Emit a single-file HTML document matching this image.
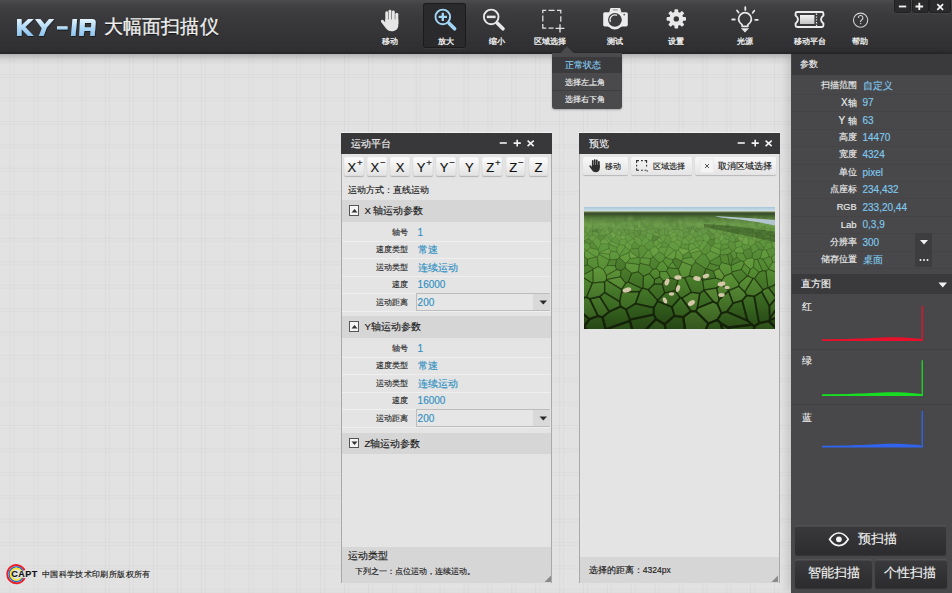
<!DOCTYPE html>
<html><head><meta charset="utf-8">
<style>
*{box-sizing:border-box;margin:0;padding:0}
html,body{width:952px;height:593px;overflow:hidden}
body{-webkit-text-stroke-width:0.15px}
body{position:relative;font-family:"Liberation Sans",sans-serif;background-color:#e2e2e2;
background-image:linear-gradient(90deg,rgba(0,0,0,0.03) 1px,transparent 1px,transparent 3.6px,rgba(0,0,0,0.022) 3.6px,rgba(0,0,0,0.022) 4.6px,transparent 4.6px),linear-gradient(180deg,rgba(0,0,0,0.028) 1px,transparent 1px,transparent 3.2px,rgba(0,0,0,0.022) 3.2px,rgba(0,0,0,0.022) 4.2px,transparent 4.2px);
background-size:23.9px 23.4px,23.9px 23.4px;background-position:9.6px 0,0 4px}
.a{position:absolute}
#hdr{left:0;top:0;width:952px;height:54px;background:linear-gradient(#4c4c4e 0,#424244 8%,#3a3a3c 30%,#343436 65%,#2f2f31 94%,#242426 100%);}
#hshadow{left:0;top:54px;width:791px;height:11px;background:linear-gradient(rgba(0,0,0,0.2),rgba(0,0,0,0.06) 50%,rgba(0,0,0,0))}
.tl{color:#f2f2f2;-webkit-text-stroke-width:0.3px;font-size:8.25px;white-space:nowrap;text-align:center;width:60px;top:35.6px;line-height:12px}
.wb{top:-1px;height:13.5px;background:#2b2b2d;border-radius:0 0 3px 3px;box-shadow:0 0.5px 0 rgba(255,255,255,0.07),inset 0 0 0 1px rgba(0,0,0,0.25)}
#rp{left:791px;top:54px;width:161px;height:539px;background:#48484a;border-left:1px solid #474749;box-shadow:-6px 0 8px -2px rgba(0,0,0,0.13)}
.rh{left:0;width:161px;height:21px;background:#3a3a3c;color:#f2f2f2;font-size:9.4px;line-height:21px;padding-left:9px}
.rl{width:64.6px;left:0;text-align:right;color:#ececec;font-size:8.8px;line-height:17.45px;height:17.45px}
.rv{left:70.5px;color:#80c8ee;font-size:10px;line-height:17.45px;height:17.45px;white-space:nowrap}
.rsep{left:0;width:161px;height:1px;background:#444446}
.pn{background:#e4e4e4;border:1px solid #a9a9a9;border-top:none}
.pt{left:-1px;top:0;height:21.4px;background:#38383a;color:#f0f0f0;font-size:9.6px;line-height:21px;padding-left:10px;box-shadow:0 -1px 0 rgba(255,255,255,0.5)}
.ab{top:24.5px;width:19.8px;height:18.7px;background:linear-gradient(#fdfdfd,#e2e2e2);border-radius:2px;box-shadow:0 1px 1px rgba(0,0,0,0.22),inset 0 0 0 0.5px rgba(0,0,0,0.06);font-size:13px;line-height:22.5px;text-align:center;color:#111}
.ab sup{font-size:9.5px;vertical-align:top;line-height:9px;position:relative;top:1.2px;margin-left:0.8px}
.sh{left:0;width:209.4px;height:21.7px;background:#d6d6d6;color:#1a1a1a;font-size:9.6px;line-height:21.5px;padding-left:23px}
.sb{left:7px;top:5px;width:10.5px;height:10.5px;border:1px solid #555;background:#f4f4f4}
.ml{left:0;width:66px;text-align:right;color:#2a2a2a;font-size:8.2px;height:17.5px;line-height:17.5px}
.mv{left:76px;color:#2f8fc2;font-size:10px;height:17.5px;line-height:17.5px;white-space:nowrap}
.msep{left:0;width:209.4px;height:1px;background:#efefef}
.btn{background:linear-gradient(#f8f8f8,#e4e4e4);border-radius:2px;box-shadow:0 1px 1px rgba(0,0,0,0.2);font-size:10px;color:#222;line-height:18.5px;height:18.5px;top:24px}
.dk{background:linear-gradient(#3a3a3c,#2c2c2e);border-radius:2px;box-shadow:inset 0 1.5px 0 rgba(255,255,255,0.13),0 1px 1px rgba(0,0,0,0.3);color:#f2f2f2;text-align:center}
</style></head><body>

<!-- header -->
<div id="hdr" class="a"></div>
<div id="hshadow" class="a"></div>


<!-- logo -->
<svg class="a" style="left:0;top:0" width="240" height="53" viewBox="0 0 240 53">
<defs><linearGradient id="lg" x1="0" y1="0" x2="0" y2="1"><stop offset="0" stop-color="#e4f4ff"/><stop offset="0.45" stop-color="#b4dcf8"/><stop offset="1" stop-color="#8cc4ee"/></linearGradient><filter id="ds" x="-10%" y="-10%" width="120%" height="130%"><feDropShadow dx="0.4" dy="0.9" stdDeviation="0.5" flood-color="#0c0c0c" flood-opacity="0.8"/></filter></defs>
<g fill="url(#lg)" filter="url(#ds)">
<path d="M17 19h4.6v6.3l6.5-6.3h5.6l-8.4 8.1 8.6 8.9h-5.8l-6.5-6.8v6.8H17z"/>
<path d="M35 19h5.4l4.2 5.2 4.4-5.2h5.2l-7.4 8.6-3.2 8.4h-4.8l3-7.7z"/>
<path d="M57 26.3h10.6v3.2H57z"/>
<path d="M72.5 19h4.6l-1.6 17h-4.6z"/>
<path d="M80 19h12.5q3 0 3.2 3l-1 14h-4.6l0.5-5h-6.4l-0.5 5h-4.6zM85 23l-0.4 4.2h6.4l0.3-4.2z"/>
</g>
</svg>
<div class="a" style="left:103.6px;top:15.4px;font-size:19px;line-height:24px;color:#f0f0f0;letter-spacing:0.2px;-webkit-text-stroke-width:0.3px;text-shadow:0 1px 1px rgba(0,0,0,0.6)">大幅面扫描仪</div>

<!-- active toolbar button -->
<div class="a" style="left:423px;top:3px;width:43px;height:45px;background:#2a2a2c;border-radius:3px;box-shadow:inset 0 0 0 1px rgba(0,0,0,0.35),0 1px 0 rgba(255,255,255,0.05)"></div>

<!-- hand -->
<svg class="a" style="left:375px;top:4px" width="30" height="30" viewBox="375 4 30 30">
<g fill="#e6e6e6">
<rect x="385.3" y="11.3" width="2.7" height="12" rx="1.35"/>
<rect x="388.5" y="9.7" width="2.9" height="12" rx="1.45"/>
<rect x="391.9" y="10.5" width="2.9" height="12" rx="1.45"/>
<rect x="395.3" y="12.8" width="3" height="12" rx="1.5"/>
<path d="M385.3 19.5H398.3V25.3C398.3 29 395.6 31.3 391.8 31.3C388.6 31.3 386.9 29.9 385.3 27.6L381.1 21.9A1.45 1.45 0 0 1 383.4 20.2L385.3 22.6Z"/>
</g>
</svg>
<div class="a tl" style="left:359.5px">移动</div>

<!-- zoom in -->
<svg class="a" style="left:433px;top:7px" width="26" height="26" viewBox="0 0 26 26">
<circle cx="9.8" cy="9.9" r="7.3" fill="none" stroke="#a2d6f7" stroke-width="1.9"/>
<path d="M9.8 5.7v8.4M5.6 9.9h8.4" stroke="#a2d6f7" stroke-width="2.3"/>
<path d="M16 16.2l5.6 5.6" stroke="#a2d6f7" stroke-width="3.6" stroke-linecap="round"/>
</svg>
<div class="a tl" style="left:415.8px">放大</div>

<!-- zoom out -->
<svg class="a" style="left:481px;top:7px" width="26" height="26" viewBox="0 0 26 26">
<circle cx="10.2" cy="9.9" r="7.3" fill="none" stroke="#e8e8e8" stroke-width="1.9"/>
<path d="M5.8 9.9h8.8" stroke="#e8e8e8" stroke-width="2.5"/>
<path d="M16.4 16.2l5.6 5.6" stroke="#e8e8e8" stroke-width="3.6" stroke-linecap="round"/>
</svg>
<div class="a tl" style="left:466.5px">缩小</div>

<!-- region select -->
<svg class="a" style="left:538px;top:6px" width="30" height="30" viewBox="538 6 30 30">
<g stroke="#e2e2e2" stroke-width="1.25" fill="none">
<path d="M542.8 13.2V10.4H546.2M548.6 10.4H554.6M557 10.4H560.8V13.6M560.8 16.2V21.8M542.8 15.6V21.6M542.8 24V28H546.2M548.6 28H553.6"/>
<path d="M560 24.3V32.4M555.6 28.3H564.4" stroke-width="1.35"/>
</g>
</svg>
<div class="a tl" style="left:520px">区域选择</div>

<!-- camera -->
<svg class="a" style="left:600px;top:6px" width="30" height="26" viewBox="600 6 30 26">
<g fill="#ececec">
<rect x="603.2" y="12.2" width="24.6" height="14.2" rx="1.6"/>
<path d="M611 8.1h8.6a0.8 0.8 0 0 1 0.8 0.6l1 3.6H609.2l1-3.6a0.8 0.8 0 0 1 0.8-0.6z"/>
<circle cx="614.9" cy="19.9" r="9.5"/>
</g>
<rect x="612.8" y="9.4" width="5" height="1" fill="#8a8a8a"/>
<circle cx="614.9" cy="19.8" r="6.9" fill="#3c3c3e"/>
<path d="M610.3 21.5a4.9 4.9 0 0 1 6.2-6.3" stroke="#ececec" stroke-width="1.3" fill="none" stroke-linecap="round"/>
<circle cx="624.2" cy="14.6" r="0.9" fill="#555"/>
</svg>
<div class="a tl" style="left:584.5px">测试</div>

<!-- gear -->
<svg class="a" style="left:664px;top:6px" width="25" height="26" viewBox="0 0 25 26">
<g fill="#e8e8e8" transform="translate(12.3 12.9)">
<circle r="7.1"/>
<g id="tooth"><rect x="-1.85" y="-9.7" width="3.7" height="4.5" rx="1"/></g>
<use href="#tooth" transform="rotate(45)"/><use href="#tooth" transform="rotate(90)"/><use href="#tooth" transform="rotate(135)"/>
<use href="#tooth" transform="rotate(180)"/><use href="#tooth" transform="rotate(225)"/><use href="#tooth" transform="rotate(270)"/><use href="#tooth" transform="rotate(315)"/>
<circle r="2.7" fill="#38383a"/>
</g>
</svg>
<div class="a tl" style="left:646px">设置</div>

<!-- bulb -->
<svg class="a" style="left:728px;top:4px" width="33" height="31" viewBox="728 4 33 31">
<g stroke="#e8e8e8" fill="none" stroke-linecap="round">
<path d="M745.3 7.2V9.9M737 10.5L738.6 12.5M754.3 10.7L752.7 12.7M732.2 19.5H734.8M755.2 19.8H757.8" stroke-width="1.8"/>
<path d="M742.1 26.3V24.6C740 23.2 738.6 21.3 738.6 19.1A6.4 6.4 0 0 1 751.4 19.1C751.4 21.3 750 23.2 747.9 24.6V26.3Z" stroke-width="1.7" stroke-linejoin="round"/>
</g>
<path d="M740.9 28.3H749.1L745 32.4Z" fill="#e8e8e8"/>
</svg>
<div class="a tl" style="left:715px">光源</div>

<!-- ticket -->
<svg class="a" style="left:792px;top:9px" width="34" height="21" viewBox="792 9 34 21">
<defs><linearGradient id="tg" x1="0" y1="0" x2="0" y2="1"><stop offset="0" stop-color="#f2f2f2"/><stop offset="1" stop-color="#c4c4c4"/></linearGradient></defs>
<path d="M797.1 12H821.9A1.5 1.5 0 0 1 823.4 13.5V15.6Q818.6 19.5 823.4 23.4V25.5A1.5 1.5 0 0 1 821.9 27H797.1A1.5 1.5 0 0 1 795.6 25.5V23.4Q800.4 19.5 795.6 15.6V13.5A1.5 1.5 0 0 1 797.1 12Z" fill="none" stroke="#ececec" stroke-width="1.9"/>
<rect x="800" y="15" width="14.4" height="9" fill="url(#tg)"/>
<path d="M816.5 13.6V26" stroke="#e0e0e0" stroke-width="1.3" stroke-dasharray="1.4 1.4"/>
</svg>
<div class="a tl" style="left:779.5px">移动平台</div>

<!-- help -->
<svg class="a" style="left:851px;top:10px" width="20" height="20" viewBox="851 10 20 20">
<circle cx="860.6" cy="20.2" r="7.1" fill="none" stroke="#d4d4d4" stroke-width="1.1"/>
<path d="M858.3 17.9A2.3 2.3 0 1 1 861.6 19.9C860.9 20.3 860.6 20.8 860.6 21.6V22" fill="none" stroke="#d4d4d4" stroke-width="1.1"/>
<circle cx="860.6" cy="23.6" r="0.7" fill="#d4d4d4"/>
</svg>
<div class="a tl" style="left:829.5px">帮助</div>

<!-- window buttons -->
<div class="a wb" style="left:893.5px;width:17px"></div>
<div class="a wb" style="left:911.5px;width:17px"></div>
<div class="a wb" style="left:929px;width:21.5px"></div>
<svg class="a" style="left:893px;top:0" width="59" height="13" viewBox="0 0 59 13">
<g stroke="#f4f4f4" stroke-width="1.8">
<path d="M5.9 6.5h7.3"/><path d="M22.5 6.5h7.6M26.3 2.8v7.3"/><path d="M44.3 4.2l5.8 5.7M50.1 4.2l-5.8 5.7" stroke-width="1.7"/>
</g>
</svg>


<!-- right panel -->
<div id="rp" class="a">
<div class="a rh" style="top:-0.50px;line-height:19.5px;padding-left:8.2px">参数</div>
<div class="a rl" style="top:22.60px">扫描范围</div><div class="a rv" style="top:22.60px">自定义</div>
<div class="a rsep" style="top:39.75px"></div>
<div class="a rl" style="top:40.05px"><span style="font-size:10px">X</span>轴</div><div class="a rv" style="top:40.05px">97</div>
<div class="a rsep" style="top:57.20px"></div>
<div class="a rl" style="top:57.50px"><span style="font-size:10px">Y</span> 轴</div><div class="a rv" style="top:57.50px">63</div>
<div class="a rsep" style="top:74.65px"></div>
<div class="a rl" style="top:74.95px">高度</div><div class="a rv" style="top:74.95px">14470</div>
<div class="a rsep" style="top:92.10px"></div>
<div class="a rl" style="top:92.40px">宽度</div><div class="a rv" style="top:92.40px">4324</div>
<div class="a rsep" style="top:109.55px"></div>
<div class="a rl" style="top:109.85px">单位</div><div class="a rv" style="top:109.85px">pixel</div>
<div class="a rsep" style="top:127.00px"></div>
<div class="a rl" style="top:127.30px">点座标</div><div class="a rv" style="top:127.30px">234,432</div>
<div class="a rsep" style="top:144.45px"></div>
<div class="a rl" style="top:144.75px"><span style="font-size:9.2px">RGB</span></div><div class="a rv" style="top:144.75px">233,20,44</div>
<div class="a rsep" style="top:161.90px"></div>
<div class="a rl" style="top:162.20px"><span style="font-size:9.5px">Lab</span></div><div class="a rv" style="top:162.20px">0,3,9</div>
<div class="a rsep" style="top:179.35px"></div>
<div class="a rl" style="top:179.65px">分辨率</div><div class="a rv" style="top:179.65px">300</div>
<div class="a rsep" style="top:196.80px"></div>
<div class="a rl" style="top:197.10px">储存位置</div><div class="a rv" style="top:197.10px">桌面</div>
<div class="a rsep" style="top:214.25px"></div>

<div class="a" style="left:122.7px;top:178.7px;width:17.7px;height:34.3px;background:#3d3d3f"></div>
<svg class="a" style="left:123px;top:179.50px" width="18" height="35" viewBox="0 0 18 35">
<path d="M5 6h8l-4 4.5z" fill="#f2f2f2"/>
<circle cx="5.5" cy="26" r="1" fill="#f2f2f2"/><circle cx="9" cy="26" r="1" fill="#f2f2f2"/><circle cx="12.5" cy="26" r="1" fill="#f2f2f2"/>
</svg>
<div class="a rh" style="top:220.00px;height:19.5px;line-height:19.5px;font-size:10px;padding-left:8.5px">直方图</div>
<svg class="a" style="left:146px;top:226.5px" width="10" height="8"><path d="M0.5 1.5h8.5l-4.25 5z" fill="#f2f2f2"/></svg>
<div class="a" style="left:0;top:295.00px;width:161px;height:1px;background:#414143"></div>
<div class="a" style="left:0;top:350.00px;width:161px;height:1px;background:#414143"></div>
<div class="a" style="left:9.6px;top:247.00px;color:#f0f0f0;font-size:10px;line-height:12px">红</div>
<div class="a" style="left:9.6px;top:301.00px;color:#f0f0f0;font-size:10px;line-height:12px">绿</div>
<div class="a" style="left:9.6px;top:357.50px;color:#f0f0f0;font-size:10px;line-height:12px">蓝</div>
<svg class="a" style="left:0;top:239.00px" width="161" height="220" viewBox="0 0 161 220">
<path fill="#e8102a" d="M29.9 46.300000000000004L55 46.0C70 45.6 80 44.900000000000006 95 44.300000000000004C106 44.1 115 44.6 125 45.400000000000006L129.6 46.0V12.7h1.3V48.1H29.9z"/>
<path fill="#18dd22" d="M29.9 101.3L55 101.0C70 100.60000000000001 80 99.9 95 99.3C106 99.10000000000001 115 99.60000000000001 125 100.4L129.6 101.0V67.2h1.3V103.10000000000001H29.9z"/>
<path fill="#3064ee" d="M29.9 152.7L55 152.4C70 152.0 80 151.29999999999998 95 150.7C106 150.5 115 151.0 125 151.79999999999998L129.6 152.4V118h1.3V154.5H29.9z"/>
</svg>
<div class="a dk" style="left:3.2px;top:471.00px;width:151.3px;height:29.5px"></div>
<svg class="a" style="left:35.5px;top:477.00px" width="22" height="17" viewBox="0 0 22 17">
<path d="M1.6 8.3C4.2 4 7.2 2 10.9 2s6.7 2 9.3 6.3C17.6 12.6 14.6 14.6 10.9 14.6S4.2 12.6 1.6 8.3z" fill="none" stroke="#f4f4f4" stroke-width="1.7"/>
<circle cx="10.9" cy="8.3" r="2.9" fill="#f4f4f4"/>
</svg>
<div class="a" style="left:65.6px;top:475.2px;font-size:13px;line-height:20px;color:#f2f2f2">预扫描</div>
<div class="a dk" style="left:3.2px;top:504.80px;width:76.6px;height:29px;font-size:13px;line-height:28.5px;text-indent:1px">智能扫描</div>
<div class="a dk" style="left:82.5px;top:504.80px;width:72px;height:29px;font-size:13px;line-height:28.5px;text-indent:-2px">个性扫描</div>
</div>

<!-- dropdown -->
<svg class="a" style="left:560px;top:46px" width="16" height="8"><path d="M0 7.5L7 0.5L14 7.5z" fill="#4a4a4c"/></svg>
<div class="a" style="left:551.5px;top:52.5px;width:70px;height:56px;background:#4a4a4c;border-radius:0 0 3px 3px;box-shadow:0 1px 2px rgba(0,0,0,0.25)">
<div class="a" style="left:0;top:4px;width:70px;height:16.5px;background:#3b3b3d"></div>
<div class="a" style="left:0;top:37.5px;width:70px;height:1px;background:#3e3e40"></div>
<div class="a" style="left:13px;top:4px;font-size:8.5px;line-height:16.5px;color:#86ccf2">正常状态</div>
<div class="a" style="left:13px;top:21px;font-size:8.4px;line-height:16.5px;color:#f0f0f0">选择左上角</div>
<div class="a" style="left:13px;top:38.5px;font-size:8.4px;line-height:16.5px;color:#f0f0f0">选择右下角</div>
</div>


<!-- motion panel -->
<div class="a pn" style="left:340.6px;top:132.5px;width:211.4px;height:450.5px">
<div class="a pt" style="width:211.4px">运动平台</div>
<svg class="a" style="left:155px;top:4px" width="42" height="13" viewBox="0 0 42 13">
<g stroke="#f2f2f2" stroke-width="1.6"><path d="M2.7 6h7.1"/><path d="M16.6 6.1h7.2M20.2 2.8v6.7"/><path d="M30.6 3.6l6.1 5.5M36.7 3.6l-6.1 5.5"/></g>
</svg>
<div class="a ab" style="left:2.60px;padding-left:2px">X<sup>+</sup></div>
<div class="a ab" style="left:25.65px;padding-left:2px">X<sup>−</sup></div>
<div class="a ab" style="left:48.70px">X</div>
<div class="a ab" style="left:71.75px;padding-left:2px">Y<sup>+</sup></div>
<div class="a ab" style="left:94.80px;padding-left:2px">Y<sup>−</sup></div>
<div class="a ab" style="left:117.85px">Y</div>
<div class="a ab" style="left:140.90px;padding-left:2px">Z<sup>+</sup></div>
<div class="a ab" style="left:163.95px;padding-left:2px">Z<sup>−</sup></div>
<div class="a ab" style="left:187.00px">Z</div>
<div class="a" style="left:6.6px;top:50px;font-size:9.45px;line-height:14px;color:#1a1a1a">运动方式：直线运动</div>
<div class="a sh" style="top:67.8px">X&#8201;轴运动参数</div>
<div class="a sb" style="top:72.8px"></div>
<svg class="a" style="left:9.5px;top:75.8px" width="7" height="5"><path d="M0.5 4.5h6l-3-3.5z" fill="#333"/></svg>
<div class="a ml" style="top:91.0px">轴号</div>
<div class="a mv" style="top:91.0px">1</div>
<div class="a msep" style="top:108.0px"></div>
<div class="a ml" style="top:108.5px">速度类型</div>
<div class="a mv" style="top:108.5px">常速</div>
<div class="a msep" style="top:125.5px"></div>
<div class="a ml" style="top:126.0px">运动类型</div>
<div class="a mv" style="top:126.0px">连续运动</div>
<div class="a msep" style="top:143.0px"></div>
<div class="a ml" style="top:143.5px">速度</div>
<div class="a mv" style="top:143.5px">16000</div>
<div class="a msep" style="top:160.5px"></div>
<div class="a ml" style="top:161.0px">运动距离</div>
<div class="a msep" style="top:178.0px"></div>
<div class="a" style="left:74.5px;top:160.0px;width:134px;height:18px;background:#e6e6e6;border:1px solid #bdbdbd"></div>
<div class="a" style="left:191.5px;top:161.0px;width:16.5px;height:16px;background:#d9d9d9"></div>
<svg class="a" style="left:197px;top:167.0px" width="9" height="6"><path d="M0.5 0.5h7.5l-3.75 4z" fill="#2a2a2a"/></svg>
<div class="a mv" style="top:161.0px">200</div>
<div class="a sh" style="top:183.8px">Y轴运动参数</div>
<div class="a sb" style="top:188.8px"></div>
<svg class="a" style="left:9.5px;top:191.8px" width="7" height="5"><path d="M0.5 4.5h6l-3-3.5z" fill="#333"/></svg>
<div class="a ml" style="top:207.0px">轴号</div>
<div class="a mv" style="top:207.0px">1</div>
<div class="a msep" style="top:224.0px"></div>
<div class="a ml" style="top:224.5px">速度类型</div>
<div class="a mv" style="top:224.5px">常速</div>
<div class="a msep" style="top:241.5px"></div>
<div class="a ml" style="top:242.0px">运动类型</div>
<div class="a mv" style="top:242.0px">连续运动</div>
<div class="a msep" style="top:259.0px"></div>
<div class="a ml" style="top:259.5px">速度</div>
<div class="a mv" style="top:259.5px">16000</div>
<div class="a msep" style="top:276.5px"></div>
<div class="a ml" style="top:277.0px">运动距离</div>
<div class="a msep" style="top:294.0px"></div>
<div class="a" style="left:74.5px;top:276.0px;width:134px;height:18px;background:#e6e6e6;border:1px solid #bdbdbd"></div>
<div class="a" style="left:191.5px;top:277.0px;width:16.5px;height:16px;background:#d9d9d9"></div>
<svg class="a" style="left:197px;top:283.0px" width="9" height="6"><path d="M0.5 0.5h7.5l-3.75 4z" fill="#2a2a2a"/></svg>
<div class="a mv" style="top:277.0px">200</div>
<div class="a sh" style="top:300.1px">Z轴运动参数</div>
<div class="a sb" style="top:305.1px"></div>
<svg class="a" style="left:9.5px;top:308.6px" width="7" height="5"><path d="M0.5 0.5h6l-3 3.5z" fill="#333"/></svg>
<div class="a" style="left:0;top:414px;width:209.4px;height:36.5px;background:#d6d6d6"></div>
<div class="a" style="left:6.3px;top:416.5px;font-size:9.5px;line-height:13px;color:#1a1a1a">运动类型</div>
<div class="a" style="left:13.3px;top:432.5px;font-size:8.45px;line-height:12px;color:#1a1a1a">下列之一：点位运动，连续运动。</div>
<svg class="a" style="left:202px;top:442px" width="8" height="8"><path d="M7 0.5V7H0.5z" fill="#8a8a8a"/></svg>
</div>

<!-- preview panel -->
<div class="a pn" style="left:578.6px;top:132.5px;width:201px;height:450.5px">
<div class="a pt" style="width:201px">预览</div>
<svg class="a" style="left:155px;top:4px" width="42" height="13" viewBox="0 0 42 13">
<g stroke="#f2f2f2" stroke-width="1.6"><path d="M2.7 6h7.1"/><path d="M16.6 6.1h7.2M20.2 2.8v6.7"/><path d="M30.6 3.6l6.1 5.5M36.7 3.6l-6.1 5.5"/></g>
</svg>
<div class="a btn" style="left:3.5px;width:45px"></div>
<svg class="a" style="left:9.6px;top:26.9px" width="11.2" height="13.5" viewBox="380.5 9.5 18.5 22.3">
<g fill="#2e2e2e">
<rect x="385.3" y="11.3" width="2.7" height="12" rx="1.35"/>
<rect x="388.5" y="9.7" width="2.9" height="12" rx="1.45"/>
<rect x="391.9" y="10.5" width="2.9" height="12" rx="1.45"/>
<rect x="395.3" y="12.8" width="3" height="12" rx="1.5"/>
<path d="M385.3 19.5H398.3V25.3C398.3 29 395.6 31.3 391.8 31.3C388.6 31.3 386.9 29.9 385.3 27.6L381.1 21.9A1.45 1.45 0 0 1 383.4 20.2L385.3 22.6Z"/>
</g>
</svg>
<div class="a" style="left:25.5px;top:24px;font-size:8.4px;line-height:18.5px;color:#1a1a1a">移动</div>
<div class="a btn" style="left:51px;width:61.5px"></div>
<svg class="a" style="left:56.4px;top:27.5px" width="13" height="13" viewBox="0 0 13 13">
<path d="M0.6 3V0.6H3M5 0.6H6.8M8.6 0.6H10.6V3M10.6 4.8V6.4M0.6 4.8V6.4M0.6 8.2V10.2H3M5 10.2H6.8M8.6 10.2H10.2" stroke="#333" stroke-width="1.1" fill="none"/>
<circle cx="11.2" cy="10.9" r="0.7" fill="#222"/>
</svg>
<div class="a" style="left:73px;top:24px;font-size:8.4px;line-height:18.5px;color:#1a1a1a">区域选择</div>
<div class="a btn" style="left:115px;width:81px"></div>
<div class="a" style="left:121.5px;top:26.5px;width:12px;height:13px;background:#f4f4f4;box-shadow:0 0 0 1px #ececec"></div>
<svg class="a" style="left:124.5px;top:30px" width="6" height="6"><path d="M1 1l4 4M5 1l-4 4" stroke="#444" stroke-width="0.9"/></svg>
<div class="a" style="left:138.5px;top:24px;font-size:8.7px;line-height:18.5px;color:#1a1a1a">取消区域选择</div>
<div class="a" style="left:4.5px;top:74px;width:191px;height:122px;overflow:hidden" id="photo"><svg width="191" height="122" viewBox="0 0 191 122" style="display:block">
<defs>
<linearGradient id="fg" x1="0" y1="0" x2="0" y2="1">
<stop offset="0.08" stop-color="#52763a"/><stop offset="0.14" stop-color="#6a9a4a"/><stop offset="0.32" stop-color="#629a40"/><stop offset="0.55" stop-color="#548c32"/><stop offset="0.8" stop-color="#447a28"/><stop offset="1" stop-color="#33601c"/></linearGradient>
<linearGradient id="sky" x1="0" y1="0" x2="0" y2="1"><stop offset="0" stop-color="#a4c6de"/><stop offset="1" stop-color="#d8e6e6"/></linearGradient>
<linearGradient id="hz" x1="0" y1="0" x2="0" y2="1"><stop offset="0" stop-color="#6e7a40"/><stop offset="0.35" stop-color="#33482a"/><stop offset="1" stop-color="#4a6e32" stop-opacity="0"/></linearGradient>
<linearGradient id="bt" x1="0" y1="0" x2="0" y2="1"><stop offset="0.5" stop-color="#000" stop-opacity="0"/><stop offset="1" stop-color="#000" stop-opacity="0.22"/></linearGradient>
</defs>
<rect width="191" height="122" fill="url(#fg)"/>
<polygon points="3.9,7.0 4.6,2.0 4.1,-3.0 -1.0,-3.0 -1.4,9.6 2.1,14.2" fill="#b8e070" fill-opacity="0.06"/><polygon points="3.0,15.2 3.9,14.4 3.9,7.0 2.1,14.2 2.3,14.9" fill="#0a1a00" fill-opacity="0.03"/><polygon points="16.1,14.2 16.2,14.1 16.6,13.1 13.5,3.4 12.2,11.2 13.7,13.9" fill="#b8e070" fill-opacity="0.01"/><polygon points="13.5,3.4 16.6,13.1 19.3,11.9 20.4,-3.0 13.5,-3.0" fill="#b8e070" fill-opacity="0.01"/><polygon points="23.3,11.4 23.6,-3.0 20.4,-3.0 19.3,11.9 21.3,14.4" fill="#b8e070" fill-opacity="0.03"/><polygon points="23.3,11.4 25.2,13.0 27.3,13.2 28.1,11.4 26.4,-3.0 23.6,-3.0" fill="#b8e070" fill-opacity="0.01"/><polygon points="34.6,13.3 36.0,10.0 36.1,-0.2 31.5,12.7 32.2,14.2 32.4,14.3" fill="#b8e070" fill-opacity="0.05"/><polygon points="36.1,-0.2 36.0,10.0 38.4,13.9 39.7,13.5 40.1,12.0 38.8,-3.0 36.5,-3.0" fill="#b8e070" fill-opacity="0.04"/><polygon points="40.1,12.0 43.4,12.5 44.8,-3.0 38.8,-3.0" fill="#0a1a00" fill-opacity="0.03"/><polygon points="43.4,12.5 43.5,13.7 47.9,13.2 48.1,13.1 49.2,10.7 49.6,1.6 49.2,-3.0 44.8,-3.0" fill="#b8e070" fill-opacity="0.12"/><polygon points="52.8,14.3 54.6,13.2 49.6,1.6 49.2,10.7 52.4,14.4" fill="#0a1a00" fill-opacity="0.07"/><polygon points="49.6,1.6 54.6,13.2 57.3,13.7 57.4,13.7 57.5,13.4 55.2,-3.0 49.2,-3.0" fill="#0a1a00" fill-opacity="0.06"/><polygon points="62.5,14.1 64.5,10.8 63.6,6.6 60.1,12.4 62.0,14.2" fill="#b8e070" fill-opacity="0.05"/><polygon points="73.0,6.6 73.9,-2.0 73.9,-3.0 64.2,-3.0 63.6,6.6 64.5,10.8 66.2,13.1 68.3,12.6" fill="#b8e070" fill-opacity="0.01"/><polygon points="73.3,11.1 73.0,6.6 68.3,12.6 70.0,14.6" fill="#0a1a00" fill-opacity="0.01"/><polygon points="78.8,13.5 73.9,-2.0 73.0,6.6 73.3,11.1 73.8,12.3 78.3,14.3" fill="#b8e070" fill-opacity="0.01"/><polygon points="73.9,-2.0 78.8,13.5 81.9,12.4 81.9,12.4 82.3,-3.0 73.9,-3.0" fill="#b8e070" fill-opacity="0.04"/><polygon points="81.9,12.4 84.7,13.7 85.0,13.8 85.3,13.2 87.9,2.2 88.3,-3.0 82.3,-3.0" fill="#0a1a00" fill-opacity="0.02"/><polygon points="87.9,2.2 85.3,13.2 88.6,12.9" fill="#0a1a00" fill-opacity="0.03"/><polygon points="87.9,2.2 88.6,12.9 89.6,14.7 89.7,14.8 90.9,14.8 91.2,14.6 91.5,14.2 92.9,3.7 92.0,-3.0 88.3,-3.0" fill="#0a1a00" fill-opacity="0.05"/><polygon points="95.3,11.8 92.9,3.7 91.5,14.2 94.6,13.0" fill="#0a1a00" fill-opacity="0.04"/><polygon points="100.2,12.1 100.8,-3.0 92.0,-3.0 92.9,3.7 95.3,11.8 97.9,13.4" fill="#0a1a00" fill-opacity="0.04"/><polygon points="103.5,13.7 105.8,11.1 105.6,-3.0 100.8,-3.0 100.2,12.1 102.2,14.1" fill="#b8e070" fill-opacity="0.06"/><polygon points="105.8,11.1 107.2,12.6 109.3,13.2 110.6,10.9 110.3,-3.0 105.6,-3.0" fill="#b8e070" fill-opacity="0.02"/><polygon points="110.6,10.9 113.9,13.7 116.4,-3.0 110.3,-3.0" fill="#b8e070" fill-opacity="0.03"/><polygon points="113.9,13.7 114.1,14.2 118.7,11.3 118.7,10.4 118.6,-3.0 116.4,-3.0" fill="#0a1a00" fill-opacity="0.03"/><polygon points="118.7,10.4 123.3,12.6 125.1,12.1 125.2,-3.0 118.6,-3.0" fill="#b8e070" fill-opacity="0.05"/><polygon points="123.3,12.6 118.7,10.4 118.7,11.3 119.6,13.5 120.2,13.6" fill="#0a1a00" fill-opacity="0.08"/><polygon points="129.4,-3.0 125.2,-3.0 125.1,12.1 125.3,12.7 128.7,13.4 129.7,12.7" fill="#b8e070" fill-opacity="0.03"/><polygon points="129.7,12.7 132.5,13.2 134.1,-3.0 129.4,-3.0" fill="#b8e070" fill-opacity="0.04"/><polygon points="136.9,10.8 134.1,-3.0 134.1,-3.0 132.5,13.2 132.7,13.6 136.5,12.9" fill="#0a1a00" fill-opacity="0.03"/><polygon points="145.4,12.7 146.4,-3.0 143.0,-3.0 141.6,13.3 141.7,13.7" fill="#0a1a00" fill-opacity="0.05"/><polygon points="145.4,12.7 147.2,14.0 147.8,14.1 150.5,-3.0 146.4,-3.0" fill="#b8e070" fill-opacity="0.03"/><polygon points="152.5,-3.0 150.5,-3.0 147.8,14.1 148.6,14.7 149.0,14.6 151.5,12.4 151.8,11.9" fill="#0a1a00" fill-opacity="0.03"/><polygon points="151.8,11.9 154.7,14.1 156.0,14.2 155.5,-3.0 152.5,-3.0" fill="#0a1a00" fill-opacity="0.04"/><polygon points="156.0,14.2 156.1,14.3 159.8,12.1 156.9,-3.0 155.5,-3.0" fill="#b8e070" fill-opacity="0.00"/><polygon points="164.5,13.0 164.6,12.9 165.4,-3.0 156.9,-3.0 159.8,12.1 160.4,12.9 162.9,13.4" fill="#0a1a00" fill-opacity="0.05"/><polygon points="171.4,-3.0 165.4,-3.0 164.6,12.9 168.7,12.9 169.2,12.5" fill="#0a1a00" fill-opacity="0.01"/><polygon points="169.2,12.5 171.1,13.9 172.7,13.4 173.2,-3.0 171.4,-3.0" fill="#b8e070" fill-opacity="0.10"/><polygon points="172.7,13.4 173.2,13.9 176.2,12.5 175.3,-3.0 173.2,-3.0" fill="#0a1a00" fill-opacity="0.02"/><polygon points="176.2,12.5 176.9,13.5 177.8,13.6 179.1,12.3 176.8,-3.0 175.3,-3.0" fill="#b8e070" fill-opacity="0.05"/><polygon points="179.1,12.3 181.5,13.3 183.8,7.9 185.9,-3.0 176.8,-3.0" fill="#0a1a00" fill-opacity="0.05"/><polygon points="186.4,15.1 189.1,0.7 189.0,-1.9 188.9,-3.0 185.9,-3.0 183.8,7.9 185.2,14.9" fill="#b8e070" fill-opacity="0.01"/><polygon points="189.8,11.9 189.1,0.7 186.4,15.1 186.9,15.3" fill="#0a1a00" fill-opacity="0.01"/><polygon points="194.0,15.2 194.0,12.4 189.0,-1.9 189.1,0.7 189.8,11.9 190.0,12.3 193.1,15.5 193.2,15.5" fill="#0a1a00" fill-opacity="0.01"/><polygon points="189.0,-1.9 194.0,12.4 194.0,-3.0 188.9,-3.0" fill="#b8e070" fill-opacity="0.04"/><polygon points="2.3,14.9 2.1,14.2 -1.4,9.6 -2.8,14.1 -0.0,15.6" fill="#b8e070" fill-opacity="0.11"/><polygon points="7.0,11.9 4.6,2.0 3.9,7.0 3.9,14.4 5.8,13.5" fill="#0a1a00" fill-opacity="0.01"/><polygon points="7.5,16.5 9.4,13.5 7.0,11.9 5.8,13.5" fill="#b8e070" fill-opacity="0.07"/><polygon points="13.7,13.9 12.2,11.2 9.4,13.5 11.7,16.4 12.1,16.4" fill="#b8e070" fill-opacity="0.02"/><polygon points="20.8,15.9 21.3,15.7 21.3,14.4 19.3,11.9 16.6,13.1 16.2,14.1" fill="#b8e070" fill-opacity="0.04"/><polygon points="22.1,16.1 22.9,15.8 25.2,13.0 23.3,11.4 21.3,14.4 21.3,15.7" fill="#0a1a00" fill-opacity="0.02"/><polygon points="22.9,15.8 27.2,15.5 27.7,15.4 27.3,13.2 25.2,13.0" fill="#0a1a00" fill-opacity="0.03"/><polygon points="32.2,14.2 31.5,12.7 28.1,11.4 27.3,13.2 27.7,15.4 28.2,15.7 29.6,15.9" fill="#0a1a00" fill-opacity="0.01"/><polygon points="36.6,15.2 34.6,13.3 32.4,14.3 33.3,15.9" fill="#0a1a00" fill-opacity="0.04"/><polygon points="37.3,15.7 38.4,13.9 36.0,10.0 34.6,13.3 36.6,15.2" fill="#b8e070" fill-opacity="0.00"/><polygon points="42.8,15.2 43.5,13.7 43.4,12.5 40.1,12.0 39.7,13.5" fill="#0a1a00" fill-opacity="0.05"/><polygon points="43.7,16.6 47.4,14.8 47.9,13.2 43.5,13.7 42.8,15.2 42.8,15.9" fill="#b8e070" fill-opacity="0.00"/><polygon points="52.4,14.4 49.2,10.7 48.1,13.1 50.9,17.0" fill="#b8e070" fill-opacity="0.01"/><polygon points="56.1,17.2 57.3,13.7 54.6,13.2 52.8,14.3 55.2,17.2" fill="#b8e070" fill-opacity="0.09"/><polygon points="60.8,16.0 62.0,14.2 60.1,12.4 57.5,13.4 57.4,13.7 60.3,16.0" fill="#b8e070" fill-opacity="0.09"/><polygon points="66.2,13.1 64.5,10.8 62.5,14.1 65.0,16.2 66.2,14.4" fill="#b8e070" fill-opacity="0.03"/><polygon points="68.7,15.2 69.9,14.7 70.0,14.6 68.3,12.6 66.2,13.1 66.2,14.4 67.2,14.8" fill="#0a1a00" fill-opacity="0.02"/><polygon points="71.3,16.7 73.9,16.3 73.8,12.3 73.3,11.1 70.0,14.6 69.9,14.7" fill="#b8e070" fill-opacity="0.03"/><polygon points="78.3,14.3 73.8,12.3 73.9,16.3 75.3,17.8 75.7,17.7 78.0,15.7 78.3,15.1" fill="#b8e070" fill-opacity="0.04"/><polygon points="81.7,16.1 81.9,12.4 78.8,13.5 78.3,14.3 78.3,15.1" fill="#0a1a00" fill-opacity="0.01"/><polygon points="81.7,16.1 81.8,16.1 84.7,13.7 81.9,12.4 81.9,12.4 81.7,16.1" fill="#0a1a00" fill-opacity="0.04"/><polygon points="89.6,14.7 88.6,12.9 85.3,13.2 85.0,13.8 85.6,15.5" fill="#0a1a00" fill-opacity="0.09"/><polygon points="91.5,14.2 91.2,14.6 94.6,16.2 95.0,15.3 94.6,13.0" fill="#0a1a00" fill-opacity="0.00"/><polygon points="97.9,13.4 95.3,11.8 94.6,13.0 95.0,15.3 97.8,14.0" fill="#b8e070" fill-opacity="0.10"/><polygon points="98.3,16.3 100.9,16.5 101.7,16.2 102.2,14.1 100.2,12.1 97.9,13.4 97.8,14.0" fill="#0a1a00" fill-opacity="0.01"/><polygon points="107.2,12.6 105.8,11.1 103.5,13.7 106.3,15.8 106.3,15.8" fill="#b8e070" fill-opacity="0.02"/><polygon points="108.7,15.4 109.9,14.6 109.3,13.2 107.2,12.6 106.3,15.8" fill="#b8e070" fill-opacity="0.02"/><polygon points="112.4,15.9 113.4,15.5 114.0,14.8 114.1,14.2 113.9,13.7 110.6,10.9 109.3,13.2 109.9,14.6" fill="#b8e070" fill-opacity="0.03"/><polygon points="119.6,13.5 118.7,11.3 114.1,14.2 114.0,14.8 118.3,16.0" fill="#b8e070" fill-opacity="0.04"/><polygon points="125.3,12.7 125.1,12.1 123.3,12.6 120.2,13.6 122.5,15.9 125.0,15.0" fill="#0a1a00" fill-opacity="0.10"/><polygon points="128.7,13.4 125.3,12.7 125.0,15.0 125.4,15.6 129.1,16.5 129.8,16.2" fill="#0a1a00" fill-opacity="0.01"/><polygon points="132.5,16.3 132.5,16.2 132.7,13.6 132.5,13.2 129.7,12.7 128.7,13.4 129.8,16.2 131.2,16.5" fill="#b8e070" fill-opacity="0.02"/><polygon points="132.7,13.6 132.5,16.2 137.3,14.9 136.5,12.9" fill="#0a1a00" fill-opacity="0.00"/><polygon points="137.3,14.9 137.5,15.0 141.5,14.3 141.7,13.7 141.6,13.3 136.9,10.8 136.5,12.9" fill="#b8e070" fill-opacity="0.06"/><polygon points="143.9,16.8 147.2,14.0 145.4,12.7 141.7,13.7 141.5,14.3 142.5,16.7" fill="#0a1a00" fill-opacity="0.02"/><polygon points="149.0,14.6 152.0,16.4 152.6,15.4 151.5,12.4" fill="#b8e070" fill-opacity="0.05"/><polygon points="151.5,12.4 152.6,15.4 154.7,14.1 151.8,11.9" fill="#b8e070" fill-opacity="0.09"/><polygon points="159.5,15.2 160.4,12.9 159.8,12.1 156.1,14.3 156.8,16.0" fill="#0a1a00" fill-opacity="0.01"/><polygon points="161.3,16.5 162.9,13.4 160.4,12.9 159.5,15.2" fill="#b8e070" fill-opacity="0.00"/><polygon points="166.8,16.1 168.2,15.9 168.7,12.9 164.6,12.9 164.5,13.0 165.1,14.6" fill="#0a1a00" fill-opacity="0.01"/><polygon points="171.1,13.9 169.2,12.5 168.7,12.9 168.2,15.9 170.0,16.6" fill="#b8e070" fill-opacity="0.04"/><polygon points="174.5,17.1 175.6,16.7 176.9,13.5 176.2,12.5 173.2,13.9" fill="#0a1a00" fill-opacity="0.11"/><polygon points="179.1,12.3 177.8,13.6 179.7,15.3 181.5,13.5 181.5,13.3" fill="#0a1a00" fill-opacity="0.07"/><polygon points="181.5,13.5 183.9,15.6 185.2,14.9 183.8,7.9 181.5,13.3" fill="#0a1a00" fill-opacity="0.01"/><polygon points="188.3,17.1 188.6,17.1 189.4,16.5 190.0,12.3 189.8,11.9 186.9,15.3" fill="#b8e070" fill-opacity="0.05"/><polygon points="190.0,12.3 189.4,16.5 193.1,15.5" fill="#b8e070" fill-opacity="0.03"/><polygon points="-1.4,20.8 -0.8,20.4 -0.0,15.6 -2.8,14.1 -3.0,14.2 -3.0,19.6" fill="#0a1a00" fill-opacity="0.04"/><polygon points="3.0,15.2 2.3,14.9 -0.0,15.6 -0.8,20.4 -0.5,20.4 3.6,16.5" fill="#b8e070" fill-opacity="0.09"/><polygon points="7.4,17.4 7.5,16.5 5.8,13.5 3.9,14.4 3.0,15.2 3.6,16.5 4.9,17.7" fill="#b8e070" fill-opacity="0.01"/><polygon points="7.4,17.4 8.4,18.2 8.6,18.2 11.7,16.4 9.4,13.5 9.4,13.5 7.5,16.5" fill="#0a1a00" fill-opacity="0.03"/><polygon points="16.0,18.4 16.1,14.2 13.7,13.9 12.1,16.4 13.1,17.6" fill="#b8e070" fill-opacity="0.03"/><polygon points="17.5,19.1 20.8,15.9 16.2,14.1 16.1,14.2 16.0,18.4 16.4,18.8" fill="#b8e070" fill-opacity="0.07"/><polygon points="24.1,19.8 27.2,15.5 22.9,15.8 22.1,16.1 23.5,19.4" fill="#0a1a00" fill-opacity="0.00"/><polygon points="33.7,17.4 33.3,15.9 32.4,14.3 32.2,14.2 29.6,15.9 31.8,19.7" fill="#0a1a00" fill-opacity="0.08"/><polygon points="37.3,15.7 36.6,15.2 33.3,15.9 33.7,17.4 37.6,17.6" fill="#0a1a00" fill-opacity="0.03"/><polygon points="37.8,18.0 37.8,18.0 40.9,17.3 42.8,15.9 42.8,15.2 39.7,13.5 38.4,13.9 37.3,15.7 37.6,17.6" fill="#b8e070" fill-opacity="0.01"/><polygon points="48.0,18.9 47.4,14.8 43.7,16.6 45.3,18.8 45.7,19.2" fill="#b8e070" fill-opacity="0.05"/><polygon points="50.9,17.0 48.1,13.1 47.9,13.2 47.4,14.8 48.0,18.9 49.5,19.3 50.9,17.4" fill="#0a1a00" fill-opacity="0.05"/><polygon points="55.2,17.2 52.8,14.3 52.4,14.4 50.9,17.0 50.9,17.4 53.8,17.7" fill="#b8e070" fill-opacity="0.02"/><polygon points="57.3,19.1 57.9,19.2 60.3,16.0 57.4,13.7 57.3,13.7 56.1,17.2" fill="#0a1a00" fill-opacity="0.06"/><polygon points="62.5,14.1 62.0,14.2 60.8,16.0 63.6,19.1 64.8,18.1 65.0,16.2" fill="#b8e070" fill-opacity="0.01"/><polygon points="68.2,18.5 68.2,18.5 68.7,15.2 67.2,14.8" fill="#0a1a00" fill-opacity="0.07"/><polygon points="68.2,18.5 69.5,19.3 71.3,16.7 69.9,14.7 68.7,15.2" fill="#0a1a00" fill-opacity="0.02"/><polygon points="78.0,15.7 80.7,18.8 81.7,16.1 81.7,16.1 78.3,15.1" fill="#0a1a00" fill-opacity="0.08"/><polygon points="81.8,16.1 85.1,17.0 85.6,15.5 85.0,13.8 84.7,13.7" fill="#0a1a00" fill-opacity="0.05"/><polygon points="85.6,18.9 88.0,19.4 88.4,19.0 89.7,14.8 89.6,14.7 85.6,15.5 85.1,17.0" fill="#0a1a00" fill-opacity="0.08"/><polygon points="91.2,14.6 90.9,14.8 92.0,18.6 92.4,18.8 94.9,19.1 95.3,18.4 94.6,16.2" fill="#0a1a00" fill-opacity="0.10"/><polygon points="95.0,15.3 94.6,16.2 95.3,18.4 96.9,18.0 98.3,16.3 97.8,14.0" fill="#b8e070" fill-opacity="0.07"/><polygon points="103.5,13.7 102.2,14.1 101.7,16.2 103.3,17.9 106.2,15.9 106.3,15.8" fill="#b8e070" fill-opacity="0.06"/><polygon points="108.7,15.4 106.3,15.8 106.3,15.8 106.2,15.9 107.6,19.3 108.6,19.2" fill="#b8e070" fill-opacity="0.03"/><polygon points="109.1,19.3 111.0,18.7 112.4,15.9 109.9,14.6 108.7,15.4 108.6,19.2" fill="#0a1a00" fill-opacity="0.02"/><polygon points="118.3,16.0 114.0,14.8 113.4,15.5 116.7,21.1 116.7,21.0 118.3,18.8 118.7,17.9 118.8,17.5" fill="#b8e070" fill-opacity="0.08"/><polygon points="122.5,15.9 120.2,13.6 119.6,13.5 118.3,16.0 118.8,17.5 122.0,16.7" fill="#0a1a00" fill-opacity="0.01"/><polygon points="125.0,15.0 122.5,15.9 122.0,16.7 123.1,19.4 124.8,21.3 125.2,21.7 125.4,15.6" fill="#b8e070" fill-opacity="0.03"/><polygon points="125.4,15.6 125.2,21.7 125.2,21.7 126.9,21.2 126.9,21.1 129.1,16.5" fill="#b8e070" fill-opacity="0.06"/><polygon points="132.5,16.2 132.5,16.3 133.8,18.6 136.5,18.9 137.5,17.0 137.5,15.0 137.3,14.9" fill="#b8e070" fill-opacity="0.01"/><polygon points="142.5,16.7 141.5,14.3 137.5,15.0 137.5,17.0 141.7,18.2" fill="#b8e070" fill-opacity="0.08"/><polygon points="148.2,16.8 148.6,14.7 147.8,14.1 147.2,14.0 143.9,16.8 146.3,18.5 146.8,18.6" fill="#0a1a00" fill-opacity="0.00"/><polygon points="152.0,16.4 149.0,14.6 148.6,14.7 148.2,16.8 151.5,18.9 152.8,19.0" fill="#0a1a00" fill-opacity="0.00"/><polygon points="156.1,14.3 156.0,14.2 154.7,14.1 152.6,15.4 152.0,16.4 152.8,19.0 153.5,19.6 156.6,17.0 156.8,16.0" fill="#b8e070" fill-opacity="0.01"/><polygon points="161.4,16.8 161.3,16.5 159.5,15.2 156.8,16.0 156.6,17.0 158.1,18.1 159.4,17.8" fill="#0a1a00" fill-opacity="0.06"/><polygon points="162.7,18.1 162.8,18.1 165.1,14.6 164.5,13.0 162.9,13.4 161.3,16.5 161.4,16.8" fill="#0a1a00" fill-opacity="0.05"/><polygon points="162.8,18.1 166.1,19.1 166.8,16.1 165.1,14.6" fill="#b8e070" fill-opacity="0.04"/><polygon points="171.9,19.4 173.5,18.6 174.5,17.1 173.2,13.9 172.7,13.4 171.1,13.9 170.0,16.6" fill="#0a1a00" fill-opacity="0.09"/><polygon points="179.7,15.3 177.8,13.6 176.9,13.5 175.6,16.7 177.4,17.0 179.6,16.0" fill="#b8e070" fill-opacity="0.06"/><polygon points="183.7,16.3 183.9,15.6 181.5,13.5 179.7,15.3 179.6,16.0 181.4,18.0" fill="#b8e070" fill-opacity="0.02"/><polygon points="183.7,16.3 186.0,19.8 188.3,17.1 186.9,15.3 186.4,15.1 185.2,14.9 183.9,15.6" fill="#b8e070" fill-opacity="0.06"/><polygon points="193.1,15.5 189.4,16.5 188.6,17.1 191.7,20.6 192.6,19.9 193.2,15.5" fill="#b8e070" fill-opacity="0.04"/><polygon points="4.0,20.7 4.9,17.7 3.6,16.5 -0.5,20.4 2.9,20.9" fill="#b8e070" fill-opacity="0.04"/><polygon points="8.4,18.2 7.4,17.4 4.9,17.7 4.0,20.7 5.6,22.3" fill="#b8e070" fill-opacity="0.10"/><polygon points="12.1,16.4 11.7,16.4 8.6,18.2 8.8,18.6 11.8,20.4 13.1,17.6" fill="#0a1a00" fill-opacity="0.00"/><polygon points="16.4,18.8 16.0,18.4 13.1,17.6 11.8,20.4 12.2,21.8 13.3,22.3 14.2,21.7" fill="#0a1a00" fill-opacity="0.00"/><polygon points="23.5,19.4 22.1,16.1 21.3,15.7 20.8,15.9 17.5,19.1 19.1,21.5" fill="#b8e070" fill-opacity="0.06"/><polygon points="28.2,15.7 27.7,15.4 27.2,15.5 24.1,19.8 24.9,20.7 27.2,20.8" fill="#0a1a00" fill-opacity="0.03"/><polygon points="29.6,15.9 28.2,15.7 27.2,20.8 28.3,21.4 31.7,20.2 31.8,19.7" fill="#b8e070" fill-opacity="0.06"/><polygon points="33.7,17.4 31.8,19.7 31.7,20.2 34.1,22.5 37.8,18.0 37.6,17.6" fill="#b8e070" fill-opacity="0.04"/><polygon points="41.8,20.1 40.9,17.3 37.8,18.0 39.9,22.2 40.5,22.6 40.9,22.4" fill="#0a1a00" fill-opacity="0.02"/><polygon points="45.3,18.8 43.7,16.6 42.8,15.9 40.9,17.3 41.8,20.1" fill="#0a1a00" fill-opacity="0.06"/><polygon points="50.9,17.4 49.5,19.3 50.5,21.4 53.8,20.6 53.8,17.7" fill="#0a1a00" fill-opacity="0.10"/><polygon points="53.8,20.6 56.0,21.1 57.3,19.1 56.1,17.2 55.2,17.2 53.8,17.7" fill="#b8e070" fill-opacity="0.10"/><polygon points="63.6,19.1 60.8,16.0 60.3,16.0 57.9,19.2 62.7,21.4" fill="#0a1a00" fill-opacity="0.08"/><polygon points="66.2,14.4 65.0,16.2 64.8,18.1 68.2,18.5 67.2,14.8" fill="#0a1a00" fill-opacity="0.06"/><polygon points="69.9,20.4 73.6,21.0 75.3,17.8 73.9,16.3 71.3,16.7 69.5,19.3" fill="#b8e070" fill-opacity="0.05"/><polygon points="75.7,17.7 80.2,21.2 80.5,21.1 80.6,21.1 80.7,18.8 78.0,15.7" fill="#b8e070" fill-opacity="0.03"/><polygon points="80.7,18.8 80.6,21.1 82.8,21.5 85.6,18.9 85.1,17.0 81.8,16.1 81.7,16.1" fill="#b8e070" fill-opacity="0.01"/><polygon points="90.9,14.8 89.7,14.8 88.4,19.0 92.0,18.6" fill="#b8e070" fill-opacity="0.01"/><polygon points="89.7,22.9 90.4,22.6 92.4,18.8 92.0,18.6 88.4,19.0 88.0,19.4 89.3,22.6" fill="#0a1a00" fill-opacity="0.02"/><polygon points="96.9,18.0 99.7,19.8 100.9,16.5 98.3,16.3" fill="#0a1a00" fill-opacity="0.05"/><polygon points="99.7,19.8 100.4,21.4 103.3,21.1 103.8,20.1 103.3,17.9 101.7,16.2 100.9,16.5" fill="#0a1a00" fill-opacity="0.04"/><polygon points="106.2,15.9 103.3,17.9 103.8,20.1 107.6,19.3 107.6,19.3" fill="#b8e070" fill-opacity="0.03"/><polygon points="112.6,20.6 116.3,21.5 116.7,21.1 113.4,15.5 112.4,15.9 111.0,18.7" fill="#b8e070" fill-opacity="0.06"/><polygon points="123.1,19.4 118.7,17.9 118.3,18.8 120.4,19.8 124.8,21.3" fill="#b8e070" fill-opacity="0.07"/><polygon points="118.8,17.5 118.7,17.9 123.1,19.4 122.0,16.7" fill="#b8e070" fill-opacity="0.00"/><polygon points="129.8,16.2 129.1,16.5 126.9,21.1 130.1,19.5 131.2,16.5" fill="#0a1a00" fill-opacity="0.12"/><polygon points="130.1,19.5 132.9,20.6 133.8,18.6 132.5,16.3 131.2,16.5" fill="#b8e070" fill-opacity="0.03"/><polygon points="141.0,20.0 141.4,19.7 141.7,18.2 137.5,17.0 136.5,18.9 137.3,20.0" fill="#0a1a00" fill-opacity="0.01"/><polygon points="141.4,19.7 143.7,21.4 146.3,18.5 143.9,16.8 142.5,16.7 141.7,18.2" fill="#0a1a00" fill-opacity="0.14"/><polygon points="147.8,20.0 151.5,18.9 148.2,16.8 146.8,18.6" fill="#b8e070" fill-opacity="0.08"/><polygon points="153.5,19.6 153.7,21.8 154.1,22.4 158.8,19.6 158.1,18.1 156.6,17.0" fill="#b8e070" fill-opacity="0.01"/><polygon points="158.1,18.1 158.8,19.6 161.0,21.7 161.1,21.7 161.9,19.8 159.4,17.8" fill="#0a1a00" fill-opacity="0.00"/><polygon points="161.9,19.8 162.7,18.1 161.4,16.8 159.4,17.8" fill="#b8e070" fill-opacity="0.01"/><polygon points="166.1,19.1 166.5,19.9 168.4,21.5 169.2,21.9 171.6,19.9 171.9,19.4 170.0,16.6 168.2,15.9 166.8,16.1" fill="#b8e070" fill-opacity="0.01"/><polygon points="177.4,17.0 175.6,16.7 174.5,17.1 173.5,18.6 177.2,21.0 178.5,19.4" fill="#b8e070" fill-opacity="0.02"/><polygon points="179.6,16.0 177.4,17.0 178.5,19.4 181.0,19.2 181.4,18.5 181.4,18.0" fill="#b8e070" fill-opacity="0.01"/><polygon points="181.4,18.5 186.0,20.0 186.0,19.8 183.7,16.3 181.4,18.0" fill="#b8e070" fill-opacity="0.00"/><polygon points="191.4,21.5 191.7,20.6 188.6,17.1 188.3,17.1 186.0,19.8 186.0,20.0 186.0,21.0" fill="#b8e070" fill-opacity="0.03"/><polygon points="193.2,15.5 192.6,19.9 193.8,19.8 194.0,19.6 194.0,15.2" fill="#b8e070" fill-opacity="0.02"/><polygon points="194.0,19.9 194.0,19.6 193.8,19.8" fill="#b8e070" fill-opacity="0.13"/><polygon points="-3.0,19.6 -3.0,22.0 -1.5,21.1 -1.4,20.8" fill="#b8e070" fill-opacity="0.01"/><polygon points="2.9,20.9 -0.5,20.4 -0.8,20.4 -1.4,20.8 -1.5,21.1 -0.7,24.4 2.2,25.6" fill="#0a1a00" fill-opacity="0.02"/><polygon points="8.2,23.9 8.9,23.2 8.8,18.6 8.6,18.2 8.4,18.2 5.6,22.3 6.3,23.5" fill="#0a1a00" fill-opacity="0.03"/><polygon points="8.8,18.6 8.9,23.2 12.2,21.8 11.8,20.4" fill="#b8e070" fill-opacity="0.02"/><polygon points="19.1,22.9 19.1,21.5 17.5,19.1 16.4,18.8 14.2,21.7 18.2,23.4" fill="#b8e070" fill-opacity="0.01"/><polygon points="19.1,22.9 21.3,24.6 24.3,21.9 24.9,20.7 24.1,19.8 23.5,19.4 19.1,21.5" fill="#b8e070" fill-opacity="0.02"/><polygon points="28.3,21.4 28.5,24.9 31.9,26.9 34.1,22.8 34.1,22.5 31.7,20.2" fill="#0a1a00" fill-opacity="0.01"/><polygon points="34.1,22.5 34.1,22.8 35.5,23.3 39.9,22.2 37.8,18.0 37.8,18.0" fill="#0a1a00" fill-opacity="0.01"/><polygon points="44.6,22.3 45.7,19.2 45.3,18.8 41.8,20.1 40.9,22.4" fill="#b8e070" fill-opacity="0.04"/><polygon points="49.5,19.3 48.0,18.9 45.7,19.2 44.6,22.3 45.2,23.3 50.2,23.3 50.4,22.9 50.5,21.4" fill="#b8e070" fill-opacity="0.08"/><polygon points="56.2,22.9 56.0,21.1 53.8,20.6 50.5,21.4 50.4,22.9 52.8,23.7" fill="#b8e070" fill-opacity="0.02"/><polygon points="57.1,24.3 62.7,23.1 62.8,22.6 62.7,21.4 57.9,19.2 57.3,19.1 56.0,21.1 56.2,22.9" fill="#0a1a00" fill-opacity="0.00"/><polygon points="64.8,18.1 63.6,19.1 62.7,21.4 62.8,22.6 67.2,22.5 69.5,21.1 69.9,20.4 69.5,19.3 68.2,18.5 68.2,18.5" fill="#0a1a00" fill-opacity="0.06"/><polygon points="73.7,21.2 73.6,21.0 69.9,20.4 69.5,21.1 70.6,25.1" fill="#0a1a00" fill-opacity="0.06"/><polygon points="70.6,25.6 72.5,25.7 74.6,22.3 73.7,21.2 70.6,25.1" fill="#b8e070" fill-opacity="0.01"/><polygon points="78.1,22.5 80.2,21.2 75.7,17.7 75.3,17.8 73.6,21.0 73.7,21.2 74.6,22.3 75.6,22.9" fill="#0a1a00" fill-opacity="0.01"/><polygon points="88.0,19.4 85.6,18.9 82.8,21.5 84.5,24.4 89.3,22.6" fill="#0a1a00" fill-opacity="0.00"/><polygon points="90.4,22.6 95.3,22.4 94.9,19.1 92.4,18.8" fill="#0a1a00" fill-opacity="0.06"/><polygon points="95.3,18.4 94.9,19.1 95.3,22.4 96.1,23.5 98.2,23.8 100.4,21.4 99.7,19.8 96.9,18.0" fill="#0a1a00" fill-opacity="0.00"/><polygon points="103.8,20.1 103.3,21.1 105.1,24.8 105.9,25.5 107.3,22.9 107.6,19.3" fill="#0a1a00" fill-opacity="0.10"/><polygon points="107.6,19.3 107.6,19.3 107.3,22.9 109.6,21.9 109.1,19.3 108.6,19.2" fill="#0a1a00" fill-opacity="0.06"/><polygon points="109.6,21.9 110.7,23.3 112.6,20.6 111.0,18.7 109.1,19.3" fill="#0a1a00" fill-opacity="0.04"/><polygon points="116.7,21.0 120.8,22.0 120.4,19.8 118.3,18.8" fill="#b8e070" fill-opacity="0.03"/><polygon points="124.8,21.3 120.4,19.8 120.8,22.0 124.5,23.1 124.6,23.0 125.2,21.7 125.2,21.7" fill="#0a1a00" fill-opacity="0.03"/><polygon points="126.9,21.2 132.5,23.1 132.5,23.0 132.9,20.6 130.1,19.5 126.9,21.1" fill="#0a1a00" fill-opacity="0.05"/><polygon points="136.5,18.9 133.8,18.6 132.9,20.6 132.5,23.0 136.9,22.1 137.3,20.0" fill="#b8e070" fill-opacity="0.02"/><polygon points="136.9,22.1 139.0,25.4 139.7,24.6 141.0,20.0 137.3,20.0" fill="#0a1a00" fill-opacity="0.00"/><polygon points="144.8,23.3 147.2,24.1 147.8,23.3 147.8,20.0 146.8,18.6 146.3,18.5 143.7,21.4 144.6,23.2" fill="#b8e070" fill-opacity="0.05"/><polygon points="151.5,18.9 147.8,20.0 147.8,23.3 153.7,21.8 153.5,19.6 152.8,19.0" fill="#b8e070" fill-opacity="0.02"/><polygon points="158.0,24.1 161.0,21.7 158.8,19.6 154.1,22.4 155.0,23.9" fill="#b8e070" fill-opacity="0.01"/><polygon points="161.1,21.7 161.9,22.2 166.5,19.9 166.1,19.1 162.8,18.1 162.7,18.1 161.9,19.8" fill="#0a1a00" fill-opacity="0.01"/><polygon points="162.7,23.1 168.4,21.5 166.5,19.9 161.9,22.2" fill="#b8e070" fill-opacity="0.04"/><polygon points="171.6,19.9 176.1,25.0 177.8,23.5 177.2,21.0 173.5,18.6 171.9,19.4" fill="#0a1a00" fill-opacity="0.04"/><polygon points="181.4,21.9 181.0,19.2 178.5,19.4 177.2,21.0 177.8,23.5 180.6,23.5" fill="#0a1a00" fill-opacity="0.08"/><polygon points="186.0,21.1 186.0,21.0 186.0,20.0 181.4,18.5 181.0,19.2 181.4,21.9" fill="#b8e070" fill-opacity="0.05"/><polygon points="188.8,24.8 191.3,24.3 191.7,23.1 191.4,21.5 186.0,21.0 186.0,21.1 186.1,22.8" fill="#0a1a00" fill-opacity="0.03"/><polygon points="193.8,19.8 192.6,19.9 191.7,20.6 191.4,21.5 191.7,23.1 194.0,23.1 194.0,19.9" fill="#b8e070" fill-opacity="0.00"/><polygon points="-0.7,24.4 -1.5,21.1 -3.0,22.0 -3.0,27.2" fill="#b8e070" fill-opacity="0.04"/><polygon points="3.1,26.3 6.3,23.5 5.6,22.3 4.0,20.7 2.9,20.9 2.2,25.6" fill="#b8e070" fill-opacity="0.06"/><polygon points="13.3,22.3 12.2,21.8 8.9,23.2 8.2,23.9 8.4,24.3 14.0,25.3" fill="#0a1a00" fill-opacity="0.16"/><polygon points="15.0,27.1 18.2,23.4 14.2,21.7 13.3,22.3 14.0,25.3" fill="#0a1a00" fill-opacity="0.06"/><polygon points="24.3,21.9 21.3,24.6 22.1,27.4 25.7,26.5 26.0,26.2" fill="#b8e070" fill-opacity="0.07"/><polygon points="28.3,21.4 27.2,20.8 24.9,20.7 24.3,21.9 26.0,26.2 28.5,24.9" fill="#0a1a00" fill-opacity="0.09"/><polygon points="36.7,28.1 37.1,27.8 37.5,26.0 35.5,23.3 34.1,22.8 31.9,26.9 32.1,28.0" fill="#b8e070" fill-opacity="0.03"/><polygon points="39.9,22.2 35.5,23.3 37.5,26.0 40.5,24.5 40.5,22.6" fill="#0a1a00" fill-opacity="0.02"/><polygon points="40.5,22.6 40.5,24.5 42.7,27.8 44.2,27.4 44.8,26.6 45.2,23.3 44.6,22.3 40.9,22.4" fill="#0a1a00" fill-opacity="0.05"/><polygon points="49.8,25.6 50.2,23.3 45.2,23.3 44.8,26.6" fill="#0a1a00" fill-opacity="0.01"/><polygon points="57.1,24.3 56.2,22.9 52.8,23.7 55.4,28.2 56.1,27.7" fill="#0a1a00" fill-opacity="0.10"/><polygon points="67.2,22.5 62.8,22.6 62.7,23.1 63.2,25.7 68.8,27.4 69.1,27.0" fill="#b8e070" fill-opacity="0.02"/><polygon points="69.5,21.1 67.2,22.5 69.1,27.0 70.6,25.6 70.6,25.1" fill="#b8e070" fill-opacity="0.07"/><polygon points="75.6,22.9 74.6,22.3 72.5,25.7 75.6,27.8" fill="#0a1a00" fill-opacity="0.08"/><polygon points="84.5,24.4 82.8,21.5 80.6,21.1 80.5,21.1 80.1,27.9 82.2,28.5 84.4,28.1" fill="#0a1a00" fill-opacity="0.04"/><polygon points="84.5,24.4 84.4,28.1 85.1,28.6 90.1,25.1 89.7,22.9 89.3,22.6" fill="#b8e070" fill-opacity="0.07"/><polygon points="90.1,25.1 93.1,27.9 96.1,23.5 95.3,22.4 90.4,22.6 89.7,22.9" fill="#b8e070" fill-opacity="0.02"/><polygon points="100.4,21.4 98.2,23.8 99.1,25.2 105.1,24.8 103.3,21.1" fill="#0a1a00" fill-opacity="0.02"/><polygon points="107.3,22.9 105.9,25.5 106.4,26.7 108.1,27.4 110.8,24.7 110.7,23.3 109.6,21.9" fill="#b8e070" fill-opacity="0.08"/><polygon points="110.8,24.7 112.8,24.7 116.2,22.8 116.3,21.5 112.6,20.6 110.7,23.3" fill="#0a1a00" fill-opacity="0.09"/><polygon points="122.4,26.1 124.5,23.1 120.8,22.0 116.7,21.0 116.7,21.1 116.3,21.5 116.2,22.8 118.8,27.9" fill="#0a1a00" fill-opacity="0.02"/><polygon points="124.6,23.0 128.7,26.8 129.9,27.0 132.5,24.6 132.5,23.1 126.9,21.2 125.2,21.7" fill="#b8e070" fill-opacity="0.00"/><polygon points="132.5,23.0 132.5,23.1 132.5,24.6 136.8,27.7 138.8,26.8 139.0,25.4 136.9,22.1" fill="#0a1a00" fill-opacity="0.02"/><polygon points="144.6,23.2 143.7,21.4 141.4,19.7 141.0,20.0 139.7,24.6" fill="#b8e070" fill-opacity="0.04"/><polygon points="154.1,22.4 153.7,21.8 147.8,23.3 147.2,24.1 147.9,27.9 148.2,28.0 154.1,25.9 155.0,23.9" fill="#0a1a00" fill-opacity="0.09"/><polygon points="161.1,21.7 161.0,21.7 158.0,24.1 161.4,29.7 162.6,29.5 164.4,26.5 162.7,23.1 161.9,22.2" fill="#b8e070" fill-opacity="0.00"/><polygon points="164.4,26.5 168.9,24.8 169.0,24.7 169.2,21.9 168.4,21.5 162.7,23.1" fill="#0a1a00" fill-opacity="0.04"/><polygon points="176.1,25.0 176.1,25.0 171.6,19.9 169.2,21.9 169.0,24.7 170.7,25.8" fill="#b8e070" fill-opacity="0.07"/><polygon points="186.1,22.8 186.0,21.1 181.4,21.9 180.6,23.5 183.1,26.9 183.3,26.9" fill="#b8e070" fill-opacity="0.06"/><polygon points="186.2,28.5 186.5,28.4 188.8,24.8 186.1,22.8 183.3,26.9" fill="#0a1a00" fill-opacity="0.04"/><polygon points="191.7,23.1 191.3,24.3 192.2,26.4 194.0,26.8 194.0,23.1" fill="#0a1a00" fill-opacity="0.06"/><polygon points="-0.7,24.4 -3.0,27.2 -3.0,30.6 -2.6,31.2 -1.1,31.8 3.2,27.2 3.1,26.3 2.2,25.6" fill="#0a1a00" fill-opacity="0.00"/><polygon points="3.2,27.2 5.6,29.1 9.3,28.4 8.4,24.3 8.2,23.9 6.3,23.5 3.1,26.3" fill="#0a1a00" fill-opacity="0.05"/><polygon points="8.4,24.3 9.3,28.4 12.3,30.5 13.5,30.4 14.9,28.1 15.0,27.1 14.0,25.3" fill="#0a1a00" fill-opacity="0.03"/><polygon points="14.9,28.1 21.8,28.0 22.1,27.4 21.3,24.6 19.1,22.9 18.2,23.4 15.0,27.1" fill="#b8e070" fill-opacity="0.02"/><polygon points="22.1,27.4 21.8,28.0 21.8,28.0 27.0,33.8 28.6,31.7 25.7,26.5" fill="#0a1a00" fill-opacity="0.03"/><polygon points="31.9,26.9 28.5,24.9 26.0,26.2 25.7,26.5 28.6,31.7 31.3,30.1 32.1,28.0" fill="#b8e070" fill-opacity="0.10"/><polygon points="41.7,29.2 42.7,27.8 40.5,24.5 37.5,26.0 37.1,27.8" fill="#b8e070" fill-opacity="0.00"/><polygon points="44.2,27.4 49.3,31.8 50.0,31.8 51.6,30.0 49.8,25.6 44.8,26.6" fill="#0a1a00" fill-opacity="0.03"/><polygon points="52.8,23.7 50.4,22.9 50.2,23.3 49.8,25.6 51.6,30.0 54.1,29.4 55.4,28.2" fill="#0a1a00" fill-opacity="0.06"/><polygon points="61.7,29.2 63.2,25.7 62.7,23.1 57.1,24.3 56.1,27.7" fill="#0a1a00" fill-opacity="0.03"/><polygon points="69.1,27.0 68.8,27.4 69.0,28.2 75.7,29.8 76.2,28.8 75.6,27.8 72.5,25.7 70.6,25.6" fill="#b8e070" fill-opacity="0.06"/><polygon points="76.2,28.8 78.2,28.0 78.1,22.5 75.6,22.9 75.6,27.8" fill="#b8e070" fill-opacity="0.03"/><polygon points="80.1,27.9 80.5,21.1 80.2,21.2 78.1,22.5 78.2,28.0" fill="#b8e070" fill-opacity="0.08"/><polygon points="85.1,28.6 86.8,30.9 92.9,28.6 93.1,28.3 93.1,27.9 90.1,25.1" fill="#b8e070" fill-opacity="0.08"/><polygon points="99.1,25.2 98.2,23.8 96.1,23.5 93.1,27.9 93.1,28.3 99.8,30.9 100.1,30.7" fill="#b8e070" fill-opacity="0.03"/><polygon points="105.1,24.8 99.1,25.2 100.1,30.7 100.9,30.7 106.4,26.7 105.9,25.5" fill="#0a1a00" fill-opacity="0.04"/><polygon points="109.6,29.8 110.8,30.5 114.7,29.1 112.8,24.7 110.8,24.7 108.1,27.4" fill="#0a1a00" fill-opacity="0.01"/><polygon points="118.8,27.9 116.2,22.8 112.8,24.7 114.7,29.1 118.3,29.0" fill="#b8e070" fill-opacity="0.00"/><polygon points="124.5,23.1 122.4,26.1 125.8,30.2 128.7,26.8 124.6,23.0" fill="#0a1a00" fill-opacity="0.10"/><polygon points="134.9,31.6 136.8,27.7 132.5,24.6 129.9,27.0 131.5,31.2" fill="#b8e070" fill-opacity="0.02"/><polygon points="139.0,25.4 138.8,26.8 139.0,26.9 142.0,27.7 144.8,23.3 144.6,23.2 139.7,24.6" fill="#0a1a00" fill-opacity="0.06"/><polygon points="142.0,27.7 145.8,29.9 147.9,27.9 147.2,24.1 144.8,23.3" fill="#0a1a00" fill-opacity="0.01"/><polygon points="153.5,31.0 155.1,28.8 154.1,25.9 148.2,28.0 151.8,31.2" fill="#0a1a00" fill-opacity="0.03"/><polygon points="154.1,25.9 155.1,28.8 160.1,30.6 161.4,29.7 158.0,24.1 155.0,23.9" fill="#b8e070" fill-opacity="0.03"/><polygon points="171.5,33.9 172.4,29.7 170.7,25.8 169.0,24.7 168.9,24.8 168.3,31.7" fill="#b8e070" fill-opacity="0.15"/><polygon points="172.4,29.7 176.5,27.3 176.1,25.0 170.7,25.8" fill="#0a1a00" fill-opacity="0.07"/><polygon points="180.6,23.5 177.8,23.5 176.1,25.0 176.1,25.0 176.5,27.3 179.3,30.6 183.1,26.9" fill="#0a1a00" fill-opacity="0.00"/><polygon points="191.3,24.3 188.8,24.8 186.5,28.4 188.0,28.5 192.2,26.4 192.2,26.4" fill="#b8e070" fill-opacity="0.12"/><polygon points="188.0,28.5 191.6,30.4 192.2,26.4" fill="#0a1a00" fill-opacity="0.05"/><polygon points="-2.6,31.2 -3.0,30.6 -3.0,31.7" fill="#0a1a00" fill-opacity="0.01"/><polygon points="0.5,33.6 5.1,31.6 5.6,29.1 3.2,27.2 -1.1,31.8" fill="#0a1a00" fill-opacity="0.01"/><polygon points="5.1,31.6 8.1,34.8 8.7,34.6 12.3,30.5 9.3,28.4 5.6,29.1" fill="#b8e070" fill-opacity="0.02"/><polygon points="21.8,28.0 14.9,28.1 13.5,30.4 16.3,33.9 20.5,31.4 21.8,28.0" fill="#0a1a00" fill-opacity="0.10"/><polygon points="20.5,31.4 25.3,36.2 27.0,33.9 27.0,33.8 21.8,28.0" fill="#b8e070" fill-opacity="0.02"/><polygon points="31.3,30.1 35.5,33.7 37.2,32.4 36.7,28.1 32.1,28.0" fill="#b8e070" fill-opacity="0.04"/><polygon points="41.3,31.9 41.7,29.2 37.1,27.8 36.7,28.1 37.2,32.4" fill="#b8e070" fill-opacity="0.15"/><polygon points="42.7,27.8 41.7,29.2 41.3,31.9 43.1,34.7 43.5,34.7 49.3,31.8 44.2,27.4" fill="#0a1a00" fill-opacity="0.00"/><polygon points="55.4,28.2 54.1,29.4 57.8,34.2 61.8,29.8 61.7,29.2 56.1,27.7" fill="#0a1a00" fill-opacity="0.03"/><polygon points="63.2,25.7 61.7,29.2 61.8,29.8 65.6,33.2 67.6,33.3 69.0,28.2 68.8,27.4" fill="#b8e070" fill-opacity="0.01"/><polygon points="75.7,29.8 69.0,28.2 67.6,33.3 69.1,34.6 73.1,32.7 75.6,30.3" fill="#0a1a00" fill-opacity="0.16"/><polygon points="80.1,27.9 78.2,28.0 76.2,28.8 75.7,29.8 75.6,30.3 79.2,34.8 79.9,34.9 82.2,28.5" fill="#b8e070" fill-opacity="0.02"/><polygon points="92.9,28.6 86.8,30.9 87.0,34.6 90.1,34.8 93.1,32.7" fill="#b8e070" fill-opacity="0.09"/><polygon points="99.8,30.9 93.1,28.3 92.9,28.6 93.1,32.7 97.5,35.1" fill="#0a1a00" fill-opacity="0.00"/><polygon points="109.6,29.8 108.1,27.4 106.4,26.7 100.9,30.7 105.0,34.5" fill="#0a1a00" fill-opacity="0.00"/><polygon points="119.5,33.6 119.5,33.5 118.3,29.0 114.7,29.1 110.8,30.5 111.6,33.5 113.2,34.2" fill="#0a1a00" fill-opacity="0.01"/><polygon points="119.5,33.5 123.6,35.2 125.9,32.2 125.8,30.2 122.4,26.1 118.8,27.9 118.3,29.0" fill="#b8e070" fill-opacity="0.01"/><polygon points="130.6,31.8 131.5,31.2 129.9,27.0 128.7,26.8 125.8,30.2 125.9,32.2" fill="#0a1a00" fill-opacity="0.07"/><polygon points="140.6,31.7 139.0,26.9 138.8,26.8 136.8,27.7 134.9,31.6 136.3,34.5" fill="#b8e070" fill-opacity="0.09"/><polygon points="145.2,33.0 145.8,29.9 142.0,27.7 139.0,26.9 140.6,31.7" fill="#0a1a00" fill-opacity="0.03"/><polygon points="150.2,35.2 151.8,31.2 148.2,28.0 147.9,27.9 145.8,29.9 145.2,33.0 145.3,34.0" fill="#0a1a00" fill-opacity="0.03"/><polygon points="158.1,35.0 160.1,30.6 155.1,28.8 153.5,31.0 155.4,34.0" fill="#b8e070" fill-opacity="0.10"/><polygon points="168.3,31.7 168.9,24.8 164.4,26.5 162.6,29.5 164.1,30.8" fill="#b8e070" fill-opacity="0.00"/><polygon points="179.3,30.6 176.5,27.3 172.4,29.7 171.5,33.9 171.9,34.8 175.3,34.5 179.0,32.1 179.2,31.1" fill="#0a1a00" fill-opacity="0.02"/><polygon points="186.2,28.5 183.3,26.9 183.1,26.9 179.3,30.6 179.2,31.1 186.4,31.6" fill="#b8e070" fill-opacity="0.10"/><polygon points="187.4,35.2 187.4,35.2 189.8,34.1 192.1,31.8 191.6,30.4 188.0,28.5 186.5,28.4 186.2,28.5 186.4,31.6" fill="#b8e070" fill-opacity="0.01"/><polygon points="192.2,26.4 192.2,26.4 191.6,30.4 192.1,31.8 194.0,31.9 194.0,26.8" fill="#b8e070" fill-opacity="0.06"/><polygon points="-1.1,39.6 0.9,35.3 0.5,33.6 -1.1,31.8 -2.6,31.2 -3.0,31.7 -3.0,39.5" fill="#0a1a00" fill-opacity="0.03"/><polygon points="0.5,33.6 0.9,35.3 5.7,36.9 8.1,34.8 5.1,31.6" fill="#0a1a00" fill-opacity="0.11"/><polygon points="12.3,30.5 8.7,34.6 14.3,42.0 17.0,36.7 16.3,33.9 13.5,30.4" fill="#b8e070" fill-opacity="0.01"/><polygon points="16.3,33.9 17.0,36.7 25.0,36.8 25.3,36.2 20.5,31.4" fill="#b8e070" fill-opacity="0.09"/><polygon points="28.6,31.7 27.0,33.8 27.0,33.9 35.0,37.6 35.2,37.4 35.5,33.7 31.3,30.1" fill="#0a1a00" fill-opacity="0.03"/><polygon points="35.5,33.7 35.2,37.4 40.7,38.7 43.1,34.7 41.3,31.9 37.2,32.4" fill="#b8e070" fill-opacity="0.02"/><polygon points="47.6,38.3 50.9,34.6 50.0,31.8 49.3,31.8 43.5,34.7" fill="#b8e070" fill-opacity="0.05"/><polygon points="50.0,31.8 50.9,34.6 55.9,39.2 57.7,38.5 57.8,34.2 54.1,29.4 51.6,30.0" fill="#b8e070" fill-opacity="0.02"/><polygon points="57.8,34.2 57.7,38.5 60.0,39.0 65.6,33.2 61.8,29.8" fill="#b8e070" fill-opacity="0.01"/><polygon points="78.3,35.5 79.2,34.8 75.6,30.3 73.1,32.7 75.8,36.1" fill="#b8e070" fill-opacity="0.05"/><polygon points="75.8,36.1 73.1,32.7 69.1,34.6 70.4,39.5 71.8,40.0" fill="#b8e070" fill-opacity="0.02"/><polygon points="84.4,28.1 82.2,28.5 79.9,34.9 84.6,37.9 87.0,34.6 86.8,30.9 85.1,28.6" fill="#0a1a00" fill-opacity="0.03"/><polygon points="97.5,35.1 93.1,32.7 90.1,34.8 95.9,40.0 97.4,36.8" fill="#b8e070" fill-opacity="0.07"/><polygon points="105.5,36.8 105.0,34.5 100.9,30.7 100.1,30.7 99.8,30.9 97.5,35.1 97.4,36.8 105.1,37.4" fill="#b8e070" fill-opacity="0.05"/><polygon points="110.8,30.5 109.6,29.8 105.0,34.5 105.5,36.8 109.7,36.7 111.6,33.5" fill="#b8e070" fill-opacity="0.03"/><polygon points="115.4,40.0 119.5,33.6 113.2,34.2" fill="#b8e070" fill-opacity="0.05"/><polygon points="130.2,37.1 130.6,31.8 125.9,32.2 123.6,35.2 123.8,35.9 127.1,39.2 128.1,39.0" fill="#0a1a00" fill-opacity="0.16"/><polygon points="136.3,34.5 134.9,31.6 131.5,31.2 130.6,31.8 130.2,37.1 136.5,35.9" fill="#b8e070" fill-opacity="0.02"/><polygon points="137.4,37.2 143.7,36.9 145.3,34.0 145.2,33.0 140.6,31.7 136.3,34.5 136.5,35.9" fill="#b8e070" fill-opacity="0.00"/><polygon points="155.4,34.0 153.5,31.0 151.8,31.2 150.2,35.2 150.8,35.8" fill="#0a1a00" fill-opacity="0.12"/><polygon points="162.6,29.5 161.4,29.7 160.1,30.6 158.1,35.0 158.6,36.8 164.4,37.8 164.1,30.8" fill="#b8e070" fill-opacity="0.13"/><polygon points="164.4,37.8 166.7,39.5 171.2,36.3 171.9,34.8 171.5,33.9 168.3,31.7 164.1,30.8" fill="#b8e070" fill-opacity="0.02"/><polygon points="179.0,32.1 175.3,34.5 180.0,40.8 182.8,35.5" fill="#0a1a00" fill-opacity="0.03"/><polygon points="179.2,31.1 179.0,32.1 182.8,35.5 187.4,35.2 186.4,31.6" fill="#0a1a00" fill-opacity="0.02"/><polygon points="192.1,31.8 189.8,34.1 194.0,36.4 194.0,31.9" fill="#b8e070" fill-opacity="0.02"/><polygon points="6.2,40.9 5.7,36.9 0.9,35.3 -1.1,39.6 1.5,43.9 2.6,43.6" fill="#b8e070" fill-opacity="0.00"/><polygon points="14.2,42.8 14.3,42.0 8.7,34.6 8.1,34.8 5.7,36.9 6.2,40.9" fill="#0a1a00" fill-opacity="0.10"/><polygon points="24.8,41.5 25.1,37.2 25.0,36.8 17.0,36.7 14.3,42.0 14.2,42.8 15.2,45.9" fill="#0a1a00" fill-opacity="0.02"/><polygon points="25.0,36.8 25.1,37.2 33.2,40.6 35.0,37.6 27.0,33.9 25.3,36.2" fill="#b8e070" fill-opacity="0.03"/><polygon points="35.2,37.4 35.0,37.6 33.2,40.6 32.9,45.0 35.4,48.4 41.2,40.0 40.7,38.7" fill="#b8e070" fill-opacity="0.04"/><polygon points="40.7,38.7 41.2,40.0 46.0,43.2 47.8,41.8 47.6,38.3 43.5,34.7 43.1,34.7" fill="#b8e070" fill-opacity="0.06"/><polygon points="50.9,34.6 47.6,38.3 47.8,41.8 54.4,41.4 55.9,39.2" fill="#0a1a00" fill-opacity="0.07"/><polygon points="65.6,33.2 60.0,39.0 64.1,42.9 65.6,43.0 70.4,39.5 69.1,34.6 67.6,33.3" fill="#0a1a00" fill-opacity="0.04"/><polygon points="77.0,40.2 78.3,35.5 75.8,36.1 71.8,40.0 74.1,41.9" fill="#b8e070" fill-opacity="0.03"/><polygon points="83.9,40.0 84.7,39.3 84.6,37.9 79.9,34.9 79.2,34.8 78.3,35.5 77.0,40.2" fill="#0a1a00" fill-opacity="0.04"/><polygon points="94.2,42.9 95.8,40.7 95.9,40.0 90.1,34.8 87.0,34.6 84.6,37.9 84.7,39.3 90.6,43.3 92.2,43.8" fill="#b8e070" fill-opacity="0.02"/><polygon points="97.4,36.8 95.9,40.0 95.8,40.7 104.5,42.8 105.1,37.4" fill="#0a1a00" fill-opacity="0.05"/><polygon points="105.5,36.8 105.1,37.4 104.5,42.8 105.3,44.0 112.5,40.8 109.7,36.7" fill="#b8e070" fill-opacity="0.04"/><polygon points="111.6,33.5 109.7,36.7 112.5,40.8 114.9,41.5 115.4,40.0 113.2,34.2" fill="#b8e070" fill-opacity="0.01"/><polygon points="116.3,43.5 117.1,44.5 123.8,35.9 123.6,35.2 119.5,33.5 119.5,33.6 115.4,40.0 114.9,41.5" fill="#b8e070" fill-opacity="0.04"/><polygon points="130.2,37.1 128.1,39.0 136.2,42.4 137.4,37.2 136.5,35.9" fill="#b8e070" fill-opacity="0.01"/><polygon points="136.2,42.4 136.4,43.5 145.1,40.6 143.7,36.9 137.4,37.2" fill="#0a1a00" fill-opacity="0.05"/><polygon points="143.7,36.9 145.1,40.6 147.9,44.2 150.2,43.9 152.1,41.0 150.8,35.8 150.2,35.2 145.3,34.0" fill="#0a1a00" fill-opacity="0.07"/><polygon points="158.1,35.0 155.4,34.0 150.8,35.8 152.1,41.0 157.3,39.2 158.6,36.8" fill="#b8e070" fill-opacity="0.01"/><polygon points="164.4,37.8 158.6,36.8 157.3,39.2 159.8,43.5 166.5,40.9 166.7,39.5" fill="#0a1a00" fill-opacity="0.04"/><polygon points="180.0,42.4 180.0,40.8 175.3,34.5 171.9,34.8 171.2,36.3 175.0,42.2 178.5,43.2" fill="#0a1a00" fill-opacity="0.09"/><polygon points="182.8,35.5 180.0,40.8 180.0,42.4 182.3,43.2 188.8,40.5 187.4,35.2 187.4,35.2" fill="#0a1a00" fill-opacity="0.03"/><polygon points="194.0,42.3 194.0,36.4 189.8,34.1 187.4,35.2 188.8,40.5 193.0,43.5" fill="#b8e070" fill-opacity="0.05"/><polygon points="0.4,45.9 1.5,43.9 -1.1,39.6 -3.0,39.5 -3.0,45.6" fill="#b8e070" fill-opacity="0.09"/><polygon points="14.2,42.8 6.2,40.9 2.6,43.6 11.9,49.9 13.1,50.0 14.9,47.4 15.2,46.1 15.2,45.9" fill="#b8e070" fill-opacity="0.06"/><polygon points="24.8,41.5 15.2,45.9 15.2,46.1 25.5,47.2 27.0,44.3" fill="#b8e070" fill-opacity="0.10"/><polygon points="32.9,45.0 33.2,40.6 25.1,37.2 24.8,41.5 27.0,44.3" fill="#0a1a00" fill-opacity="0.02"/><polygon points="45.0,45.6 45.9,44.4 46.0,43.2 41.2,40.0 35.4,48.4 35.7,49.5" fill="#0a1a00" fill-opacity="0.00"/><polygon points="54.1,50.4 55.3,50.6 54.4,41.4 47.8,41.8 46.0,43.2 45.9,44.4" fill="#0a1a00" fill-opacity="0.06"/><polygon points="56.0,51.4 58.2,50.5 64.1,42.9 60.0,39.0 57.7,38.5 55.9,39.2 54.4,41.4 55.3,50.6" fill="#0a1a00" fill-opacity="0.05"/><polygon points="71.8,40.0 70.4,39.5 65.6,43.0 69.0,50.0 69.2,50.0 75.2,44.9 74.1,41.9" fill="#b8e070" fill-opacity="0.11"/><polygon points="75.2,44.9 80.1,47.7 83.9,40.0 77.0,40.2 74.1,41.9" fill="#b8e070" fill-opacity="0.03"/><polygon points="81.2,50.6 81.9,50.6 90.6,43.3 84.7,39.3 83.9,40.0 80.1,47.7" fill="#b8e070" fill-opacity="0.05"/><polygon points="95.8,40.7 94.2,42.9 98.8,48.2 105.3,44.3 105.3,44.0 104.5,42.8" fill="#b8e070" fill-opacity="0.18"/><polygon points="112.5,40.8 105.3,44.0 105.3,44.3 106.3,46.4 116.3,43.5 114.9,41.5" fill="#b8e070" fill-opacity="0.13"/><polygon points="118.1,46.8 121.7,47.6 126.2,44.1 127.1,39.2 123.8,35.9 117.1,44.5" fill="#0a1a00" fill-opacity="0.05"/><polygon points="136.2,42.4 128.1,39.0 127.1,39.2 126.2,44.1 135.9,48.2 136.2,47.9 136.4,43.5" fill="#b8e070" fill-opacity="0.07"/><polygon points="147.9,44.2 145.1,40.6 136.4,43.5 136.2,47.9 143.6,47.5 146.4,45.9" fill="#0a1a00" fill-opacity="0.04"/><polygon points="159.2,46.3 159.8,43.5 157.3,39.2 152.1,41.0 150.2,43.9 152.1,45.7" fill="#b8e070" fill-opacity="0.07"/><polygon points="166.5,40.9 159.8,43.5 159.2,46.3 162.5,52.0 168.1,50.8 168.4,46.7" fill="#0a1a00" fill-opacity="0.12"/><polygon points="171.2,36.3 166.7,39.5 166.5,40.9 168.4,46.7 175.0,42.2" fill="#0a1a00" fill-opacity="0.06"/><polygon points="187.2,50.5 193.2,44.6 193.0,43.5 188.8,40.5 182.3,43.2 185.2,49.8" fill="#0a1a00" fill-opacity="0.06"/><polygon points="193.0,43.5 193.2,44.6 194.0,45.2 194.0,42.3" fill="#b8e070" fill-opacity="0.14"/><polygon points="0.6,49.9 0.4,45.9 -3.0,45.6 -3.0,52.1" fill="#0a1a00" fill-opacity="0.12"/><polygon points="1.5,43.9 0.4,45.9 0.6,49.9 3.6,52.1 11.9,49.9 2.6,43.6" fill="#b8e070" fill-opacity="0.08"/><polygon points="15.2,46.1 14.9,47.4 25.5,52.9 25.7,52.8 25.5,47.2" fill="#b8e070" fill-opacity="0.08"/><polygon points="25.5,47.2 25.7,52.8 32.5,52.5 35.6,50.6 35.7,49.5 35.4,48.4 32.9,45.0 27.0,44.3" fill="#b8e070" fill-opacity="0.01"/><polygon points="35.6,50.6 41.4,56.4 42.5,55.8 46.1,51.8 45.0,45.6 35.7,49.5" fill="#b8e070" fill-opacity="0.07"/><polygon points="46.1,51.8 54.1,50.4 45.9,44.4 45.0,45.6" fill="#b8e070" fill-opacity="0.18"/><polygon points="65.6,43.0 64.1,42.9 58.2,50.5 66.6,51.7 69.0,50.0" fill="#b8e070" fill-opacity="0.02"/><polygon points="79.0,54.1 81.2,50.6 80.1,47.7 75.2,44.9 69.2,50.0 75.3,55.8" fill="#0a1a00" fill-opacity="0.01"/><polygon points="90.6,43.3 81.9,50.6 88.5,52.6 91.1,51.1 92.2,43.8" fill="#b8e070" fill-opacity="0.10"/><polygon points="91.1,51.1 97.7,54.1 98.9,51.9 98.8,48.2 94.2,42.9 92.2,43.8" fill="#b8e070" fill-opacity="0.06"/><polygon points="105.3,44.3 98.8,48.2 98.9,51.9 107.7,50.1 106.3,46.4" fill="#0a1a00" fill-opacity="0.07"/><polygon points="107.7,50.1 111.4,53.7 118.1,46.8 117.1,44.5 116.3,43.5 106.3,46.4" fill="#b8e070" fill-opacity="0.02"/><polygon points="126.2,44.1 121.7,47.6 125.8,54.4 135.8,48.8 135.9,48.2" fill="#b8e070" fill-opacity="0.03"/><polygon points="143.6,47.5 136.2,47.9 135.9,48.2 135.8,48.8 137.6,55.6 145.4,57.5" fill="#0a1a00" fill-opacity="0.08"/><polygon points="153.2,50.4 152.1,45.7 150.2,43.9 147.9,44.2 146.4,45.9 149.0,52.5" fill="#0a1a00" fill-opacity="0.06"/><polygon points="153.2,50.4 156.7,53.9 160.0,54.5 162.5,52.0 159.2,46.3 152.1,45.7" fill="#0a1a00" fill-opacity="0.04"/><polygon points="175.0,42.2 168.4,46.7 168.1,50.8 170.3,52.3 173.5,52.4 176.0,51.4 178.5,43.2" fill="#0a1a00" fill-opacity="0.08"/><polygon points="182.3,43.2 180.0,42.4 178.5,43.2 176.0,51.4 178.8,52.1 185.2,49.8" fill="#b8e070" fill-opacity="0.04"/><polygon points="188.7,55.0 194.0,55.6 194.0,45.2 193.2,44.6 187.2,50.5" fill="#b8e070" fill-opacity="0.03"/><polygon points="-2.1,60.0 3.4,57.8 3.6,52.1 0.6,49.9 -3.0,52.1 -3.0,59.3" fill="#0a1a00" fill-opacity="0.16"/><polygon points="11.9,49.9 3.6,52.1 3.4,57.8 9.6,61.6 14.5,59.7 13.1,50.0" fill="#0a1a00" fill-opacity="0.03"/><polygon points="14.9,47.4 13.1,50.0 14.5,59.7 19.5,62.5 23.0,58.4 25.5,52.9" fill="#b8e070" fill-opacity="0.02"/><polygon points="23.0,58.4 31.3,58.8 32.5,52.5 25.7,52.8 25.5,52.9" fill="#0a1a00" fill-opacity="0.09"/><polygon points="55.4,57.5 56.0,56.3 56.0,51.4 55.3,50.6 54.1,50.4 46.1,51.8 42.5,55.8" fill="#0a1a00" fill-opacity="0.01"/><polygon points="58.2,50.5 56.0,51.4 56.0,56.3 65.5,58.4 66.6,51.7" fill="#b8e070" fill-opacity="0.03"/><polygon points="69.2,50.0 69.0,50.0 66.6,51.7 65.5,58.4 68.7,62.4 72.2,61.6 75.3,55.8" fill="#0a1a00" fill-opacity="0.12"/><polygon points="83.9,60.5 88.7,55.0 88.5,52.6 81.9,50.6 81.2,50.6 79.0,54.1" fill="#0a1a00" fill-opacity="0.02"/><polygon points="93.4,61.6 94.6,62.3 97.8,54.8 97.7,54.1 91.1,51.1 88.5,52.6 88.7,55.0" fill="#0a1a00" fill-opacity="0.17"/><polygon points="98.9,51.9 97.7,54.1 97.8,54.8 108.0,58.6 111.4,55.0 111.4,53.7 107.7,50.1" fill="#b8e070" fill-opacity="0.06"/><polygon points="125.8,54.4 121.7,47.6 118.1,46.8 111.4,53.7 111.4,55.0 121.8,61.9 122.5,61.5 125.6,56.4" fill="#0a1a00" fill-opacity="0.05"/><polygon points="135.8,48.8 125.8,54.4 125.6,56.4 135.3,59.0 137.6,55.6" fill="#0a1a00" fill-opacity="0.10"/><polygon points="149.0,52.5 146.4,45.9 143.6,47.5 145.4,57.5 146.9,58.6" fill="#0a1a00" fill-opacity="0.13"/><polygon points="146.9,58.7 156.7,53.9 153.2,50.4 149.0,52.5 146.9,58.6" fill="#0a1a00" fill-opacity="0.12"/><polygon points="168.1,50.8 162.5,52.0 160.0,54.5 160.0,56.6 166.3,62.1 169.4,60.3 170.3,52.3" fill="#b8e070" fill-opacity="0.10"/><polygon points="173.5,52.4 178.5,63.8 181.9,64.0 184.5,62.1 184.6,61.6 178.8,52.1 176.0,51.4" fill="#0a1a00" fill-opacity="0.06"/><polygon points="178.8,52.1 184.6,61.6 188.7,55.0 187.2,50.5 185.2,49.8" fill="#0a1a00" fill-opacity="0.04"/><polygon points="-1.4,68.1 -2.1,60.0 -3.0,59.3 -3.0,70.1 -2.0,69.7" fill="#0a1a00" fill-opacity="0.03"/><polygon points="8.9,62.7 9.6,61.6 3.4,57.8 -2.1,60.0 -1.4,68.1" fill="#0a1a00" fill-opacity="0.11"/><polygon points="19.5,62.5 22.4,68.5 32.4,62.7 31.3,58.8 23.0,58.4" fill="#b8e070" fill-opacity="0.06"/><polygon points="32.5,52.5 31.3,58.8 32.4,62.7 36.9,63.5 41.2,60.8 41.4,56.4 35.6,50.6" fill="#0a1a00" fill-opacity="0.18"/><polygon points="41.4,56.4 41.2,60.8 47.8,66.3 54.2,64.7 55.4,57.5 42.5,55.8" fill="#b8e070" fill-opacity="0.07"/><polygon points="65.5,58.4 56.0,56.3 55.4,57.5 54.2,64.7 59.4,69.2 65.5,66.6 68.7,62.4" fill="#0a1a00" fill-opacity="0.06"/><polygon points="72.2,61.6 75.6,64.7 82.6,64.5 84.0,60.8 83.9,60.5 79.0,54.1 75.3,55.8" fill="#b8e070" fill-opacity="0.00"/><polygon points="84.0,60.8 93.4,61.6 88.7,55.0 83.9,60.5" fill="#b8e070" fill-opacity="0.02"/><polygon points="94.6,62.3 97.3,70.8 100.6,70.8 105.2,68.9 108.0,58.6 97.8,54.8" fill="#b8e070" fill-opacity="0.07"/><polygon points="135.3,59.0 125.6,56.4 122.5,61.5 129.5,64.3 135.3,61.5" fill="#0a1a00" fill-opacity="0.09"/><polygon points="146.9,58.7 146.9,58.6 145.4,57.5 137.6,55.6 135.3,59.0 135.3,61.5 140.6,69.1 147.4,66.3 148.0,64.9" fill="#b8e070" fill-opacity="0.05"/><polygon points="157.4,62.5 160.0,56.6 160.0,54.5 156.7,53.9 146.9,58.7 148.0,64.9" fill="#0a1a00" fill-opacity="0.00"/><polygon points="163.3,69.0 163.8,69.0 166.3,62.1 160.0,56.6 157.4,62.5" fill="#0a1a00" fill-opacity="0.01"/><polygon points="170.3,52.3 169.4,60.3 174.9,65.2 178.5,63.8 173.5,52.4" fill="#0a1a00" fill-opacity="0.02"/><polygon points="188.7,55.0 184.6,61.6 184.5,62.1 194.0,66.2 194.0,55.6" fill="#b8e070" fill-opacity="0.09"/><polygon points="9.1,75.8 8.9,62.7 -1.4,68.1 -2.0,69.7 8.3,76.2" fill="#b8e070" fill-opacity="0.04"/><polygon points="14.5,59.7 9.6,61.6 8.9,62.7 9.1,75.8 20.6,74.9 22.4,73.0 22.5,72.6 22.4,68.5 19.5,62.5" fill="#b8e070" fill-opacity="0.10"/><polygon points="22.5,72.6 36.5,69.8 36.9,63.5 32.4,62.7 22.4,68.5" fill="#b8e070" fill-opacity="0.07"/><polygon points="47.8,66.3 41.2,60.8 36.9,63.5 36.5,69.8 41.7,76.2 44.2,75.0" fill="#0a1a00" fill-opacity="0.16"/><polygon points="75.6,64.7 72.2,61.6 68.7,62.4 65.5,66.6 70.5,72.3 75.8,70.0" fill="#0a1a00" fill-opacity="0.01"/><polygon points="86.5,71.0 82.6,64.5 75.6,64.7 75.8,70.0 79.5,74.0" fill="#b8e070" fill-opacity="0.08"/><polygon points="82.6,64.5 86.5,71.0 93.9,73.2 97.3,70.8 94.6,62.3 93.4,61.6 84.0,60.8" fill="#0a1a00" fill-opacity="0.07"/><polygon points="105.2,68.9 118.2,72.6 121.8,61.9 111.4,55.0 108.0,58.6" fill="#0a1a00" fill-opacity="0.13"/><polygon points="129.5,64.3 122.5,61.5 121.8,61.9 118.2,72.6 118.6,73.3 131.8,71.0" fill="#0a1a00" fill-opacity="0.18"/><polygon points="140.6,69.1 135.3,61.5 129.5,64.3 131.8,71.0 137.6,73.2" fill="#b8e070" fill-opacity="0.16"/><polygon points="147.4,66.3 154.9,76.5 163.3,69.0 157.4,62.5 148.0,64.9" fill="#0a1a00" fill-opacity="0.08"/><polygon points="169.1,71.4 170.5,71.5 174.9,65.2 169.4,60.3 166.3,62.1 163.8,69.0" fill="#b8e070" fill-opacity="0.01"/><polygon points="184.0,80.7 181.9,64.0 178.5,63.8 174.9,65.2 170.5,71.5 179.1,82.8" fill="#0a1a00" fill-opacity="0.09"/><polygon points="0.4,90.5 2.5,90.3 8.3,76.2 -2.0,69.7 -3.0,70.1 -3.0,87.7" fill="#b8e070" fill-opacity="0.04"/><polygon points="41.7,76.2 36.5,69.8 22.5,72.6 22.4,73.0 37.5,82.4" fill="#b8e070" fill-opacity="0.14"/><polygon points="59.4,69.2 54.2,64.7 47.8,66.3 44.2,75.0 58.0,81.6 59.0,81.1" fill="#0a1a00" fill-opacity="0.12"/><polygon points="65.5,66.6 59.4,69.2 59.0,81.1 64.2,82.8 70.2,77.0 70.5,72.3" fill="#0a1a00" fill-opacity="0.01"/><polygon points="75.8,70.0 70.5,72.3 70.2,77.0 78.1,77.2 79.5,74.0" fill="#0a1a00" fill-opacity="0.07"/><polygon points="78.1,77.2 80.7,85.9 91.2,83.7 93.9,73.2 86.5,71.0 79.5,74.0" fill="#0a1a00" fill-opacity="0.16"/><polygon points="120.0,83.0 118.6,73.3 118.2,72.6 105.2,68.9 100.6,70.8 107.3,85.3 115.8,86.5 119.9,83.3" fill="#0a1a00" fill-opacity="0.08"/><polygon points="131.8,71.0 118.6,73.3 120.0,83.0 132.6,81.0 137.6,77.4 137.6,73.2" fill="#b8e070" fill-opacity="0.00"/><polygon points="140.6,69.1 137.6,73.2 137.6,77.4 144.6,83.6 154.8,79.3 154.9,76.5 147.4,66.3" fill="#b8e070" fill-opacity="0.11"/><polygon points="154.9,76.5 154.8,79.3 160.8,85.1 169.1,71.4 163.8,69.0 163.3,69.0" fill="#b8e070" fill-opacity="0.11"/><polygon points="184.5,62.1 181.9,64.0 184.0,80.7 184.6,80.7 190.5,78.1 194.0,71.5 194.0,66.2" fill="#0a1a00" fill-opacity="0.00"/><polygon points="190.5,78.1 194.0,79.6 194.0,71.5" fill="#0a1a00" fill-opacity="0.14"/><polygon points="5.7,91.9 15.8,89.6 20.6,85.5 20.6,74.9 9.1,75.8 8.3,76.2 2.5,90.3" fill="#b8e070" fill-opacity="0.06"/><polygon points="22.4,73.0 20.6,74.9 20.6,85.5 35.6,94.6 37.6,85.0 37.5,82.4" fill="#0a1a00" fill-opacity="0.00"/><polygon points="44.2,75.0 41.7,76.2 37.5,82.4 37.6,85.0 55.8,84.6 58.0,81.6" fill="#0a1a00" fill-opacity="0.00"/><polygon points="70.2,77.0 64.2,82.8 73.7,93.4 80.7,85.9 78.1,77.2" fill="#0a1a00" fill-opacity="0.10"/><polygon points="91.2,83.7 96.1,90.7 97.8,91.2 107.3,85.3 100.6,70.8 97.3,70.8 93.9,73.2" fill="#0a1a00" fill-opacity="0.01"/><polygon points="132.6,81.0 120.0,83.0 119.9,83.3 129.4,94.6 133.4,96.9 135.1,92.7" fill="#b8e070" fill-opacity="0.18"/><polygon points="137.6,77.4 132.6,81.0 135.1,92.7 144.6,83.9 144.6,83.6" fill="#b8e070" fill-opacity="0.14"/><polygon points="154.8,79.3 144.6,83.6 144.6,83.9 149.0,96.2 158.1,93.6 162.7,88.3 160.8,85.1" fill="#b8e070" fill-opacity="0.12"/><polygon points="162.7,88.3 170.2,89.4 177.7,84.7 179.1,82.8 170.5,71.5 169.1,71.4 160.8,85.1" fill="#b8e070" fill-opacity="0.06"/><polygon points="190.5,78.1 184.6,80.7 192.2,90.9 194.0,91.5 194.0,79.6" fill="#0a1a00" fill-opacity="0.04"/><polygon points="0.4,90.5 -3.0,87.7 -3.0,95.2" fill="#b8e070" fill-opacity="0.00"/><polygon points="20.6,85.5 15.8,89.6 25.2,104.7 36.7,99.5 35.6,94.6" fill="#b8e070" fill-opacity="0.01"/><polygon points="37.6,85.0 35.6,94.6 36.7,99.5 42.0,102.5 51.5,96.6 55.8,84.6" fill="#b8e070" fill-opacity="0.04"/><polygon points="59.0,81.1 58.0,81.6 55.8,84.6 51.5,96.6 69.7,100.7 73.6,94.2 73.7,93.4 64.2,82.8" fill="#0a1a00" fill-opacity="0.03"/><polygon points="73.6,94.2 87.9,100.0 96.1,90.7 91.2,83.7 80.7,85.9 73.7,93.4" fill="#0a1a00" fill-opacity="0.08"/><polygon points="107.3,85.3 97.8,91.2 107.0,104.3 111.9,104.3 113.3,101.1 115.8,86.5" fill="#b8e070" fill-opacity="0.11"/><polygon points="115.8,86.5 113.3,101.1 129.4,94.6 119.9,83.3" fill="#0a1a00" fill-opacity="0.04"/><polygon points="135.1,92.7 133.4,96.9 137.5,106.3 142.8,104.7 149.0,96.2 144.6,83.9" fill="#b8e070" fill-opacity="0.08"/><polygon points="162.7,88.3 158.1,93.6 163.5,113.6 168.1,117.7 170.5,119.2 175.0,116.2 170.2,89.4" fill="#0a1a00" fill-opacity="0.02"/><polygon points="185.4,99.0 192.2,90.9 184.6,80.7 184.0,80.7 179.1,82.8 177.7,84.7" fill="#b8e070" fill-opacity="0.06"/><polygon points="185.8,111.7 194.0,99.5 194.0,91.5 192.2,90.9 185.4,99.0" fill="#b8e070" fill-opacity="0.05"/><polygon points="-3.0,95.2 -3.0,105.2 5.5,112.1 14.0,109.0 5.7,91.9 2.5,90.3 0.4,90.5" fill="#b8e070" fill-opacity="0.08"/><polygon points="5.7,91.9 14.0,109.0 18.5,110.3 25.2,104.7 15.8,89.6" fill="#b8e070" fill-opacity="0.07"/><polygon points="69.7,107.6 69.7,100.7 51.5,96.6 42.0,102.5 45.9,112.7" fill="#0a1a00" fill-opacity="0.10"/><polygon points="80.5,117.3 90.5,108.8 87.9,100.0 73.6,94.2 69.7,100.7 69.7,107.6 71.9,112.1" fill="#0a1a00" fill-opacity="0.14"/><polygon points="96.1,90.7 87.9,100.0 90.5,108.8 99.2,110.1 107.0,104.3 97.8,91.2" fill="#0a1a00" fill-opacity="0.00"/><polygon points="133.4,96.9 129.4,94.6 113.3,101.1 111.9,104.3 124.4,116.6 133.3,112.8 137.5,106.3" fill="#b8e070" fill-opacity="0.17"/><polygon points="158.1,93.6 149.0,96.2 142.8,104.7 163.5,113.6" fill="#0a1a00" fill-opacity="0.08"/><polygon points="170.2,89.4 175.0,116.2 184.7,114.1 185.5,113.1 185.8,111.7 185.4,99.0 177.7,84.7" fill="#0a1a00" fill-opacity="0.09"/><polygon points="185.5,113.1 194.0,110.1 194.0,99.5 185.8,111.7" fill="#b8e070" fill-opacity="0.18"/><polygon points="5.5,112.1 -3.0,105.2 -3.0,120.4 -0.1,119.8" fill="#0a1a00" fill-opacity="0.17"/><polygon points="21.6,124.2 21.7,122.4 18.5,110.3 14.0,109.0 5.5,112.1 -0.1,119.8 4.9,125.0 20.3,125.0" fill="#0a1a00" fill-opacity="0.06"/><polygon points="45.9,112.7 42.0,102.5 36.7,99.5 25.2,104.7 18.5,110.3 21.7,122.4 45.9,113.9" fill="#0a1a00" fill-opacity="0.04"/><polygon points="71.9,112.1 69.7,107.6 45.9,112.7 45.9,113.9 48.9,125.0 59.8,125.0" fill="#0a1a00" fill-opacity="0.07"/><polygon points="82.2,124.4 101.3,123.9 99.2,110.1 90.5,108.8 80.5,117.3" fill="#0a1a00" fill-opacity="0.07"/><polygon points="124.4,116.6 111.9,104.3 107.0,104.3 99.2,110.1 101.3,123.9 102.4,125.0 120.7,125.0" fill="#b8e070" fill-opacity="0.12"/><polygon points="168.1,117.7 163.5,113.6 142.8,104.7 137.5,106.3 133.3,112.8 136.9,116.5 144.3,120.5" fill="#b8e070" fill-opacity="0.02"/><polygon points="170.5,119.2 168.1,117.7 144.3,120.5 146.4,125.0 169.2,125.0" fill="#b8e070" fill-opacity="0.02"/><polygon points="185.5,113.1 184.7,114.1 194.0,122.9 194.0,110.1" fill="#0a1a00" fill-opacity="0.18"/><polygon points="-0.1,119.8 -3.0,120.4 -3.0,125.0 4.9,125.0" fill="#b8e070" fill-opacity="0.09"/><polygon points="45.9,113.9 21.7,122.4 21.6,124.2 22.4,125.0 48.9,125.0" fill="#b8e070" fill-opacity="0.02"/><polygon points="82.2,124.4 80.5,117.3 71.9,112.1 59.8,125.0 82.1,125.0" fill="#b8e070" fill-opacity="0.02"/><polygon points="101.3,123.9 82.2,124.4 82.1,125.0 102.4,125.0" fill="#b8e070" fill-opacity="0.09"/><polygon points="133.3,112.8 124.4,116.6 120.7,125.0 138.9,125.0 136.9,116.5" fill="#b8e070" fill-opacity="0.04"/><polygon points="144.3,120.5 136.9,116.5 138.9,125.0 146.4,125.0" fill="#0a1a00" fill-opacity="0.00"/><polygon points="184.7,114.1 175.0,116.2 170.5,119.2 169.2,125.0 194.0,125.0 194.0,122.9" fill="#b8e070" fill-opacity="0.05"/><polygon points="21.6,124.2 20.3,125.0 22.4,125.0" fill="#0a1a00" fill-opacity="0.08"/>
<g fill="none" stroke="#1a2a0c" stroke-linejoin="round"><polygon points="89.7,22.9 90.4,22.6 92.4,18.8 92.0,18.6 88.4,19.0 88.0,19.4 89.3,22.6" stroke-width="0.36" stroke-opacity="0.14"/><polygon points="-3.0,19.6 -3.0,22.0 -1.5,21.1 -1.4,20.8" stroke-width="0.36" stroke-opacity="0.14"/><polygon points="2.9,20.9 -0.5,20.4 -0.8,20.4 -1.4,20.8 -1.5,21.1 -0.7,24.4 2.2,25.6" stroke-width="0.37" stroke-opacity="0.15"/><polygon points="8.2,23.9 8.9,23.2 8.8,18.6 8.6,18.2 8.4,18.2 5.6,22.3 6.3,23.5" stroke-width="0.37" stroke-opacity="0.14"/><polygon points="8.8,18.6 8.9,23.2 12.2,21.8 11.8,20.4" stroke-width="0.36" stroke-opacity="0.14"/><polygon points="19.1,22.9 19.1,21.5 17.5,19.1 16.4,18.8 14.2,21.7 18.2,23.4" stroke-width="0.37" stroke-opacity="0.14"/><polygon points="19.1,22.9 21.3,24.6 24.3,21.9 24.9,20.7 24.1,19.8 23.5,19.4 19.1,21.5" stroke-width="0.37" stroke-opacity="0.14"/><polygon points="28.3,21.4 28.5,24.9 31.9,26.9 34.1,22.8 34.1,22.5 31.7,20.2" stroke-width="0.37" stroke-opacity="0.15"/><polygon points="34.1,22.5 34.1,22.8 35.5,23.3 39.9,22.2 37.8,18.0 37.8,18.0" stroke-width="0.37" stroke-opacity="0.14"/><polygon points="44.6,22.3 45.7,19.2 45.3,18.8 41.8,20.1 40.9,22.4" stroke-width="0.36" stroke-opacity="0.14"/><polygon points="49.5,19.3 48.0,18.9 45.7,19.2 44.6,22.3 45.2,23.3 50.2,23.3 50.4,22.9 50.5,21.4" stroke-width="0.37" stroke-opacity="0.14"/><polygon points="56.2,22.9 56.0,21.1 53.8,20.6 50.5,21.4 50.4,22.9 52.8,23.7" stroke-width="0.37" stroke-opacity="0.14"/><polygon points="57.1,24.3 62.7,23.1 62.8,22.6 62.7,21.4 57.9,19.2 57.3,19.1 56.0,21.1 56.2,22.9" stroke-width="0.37" stroke-opacity="0.14"/><polygon points="64.8,18.1 63.6,19.1 62.7,21.4 62.8,22.6 67.2,22.5 69.5,21.1 69.9,20.4 69.5,19.3 68.2,18.5 68.2,18.5" stroke-width="0.36" stroke-opacity="0.14"/><polygon points="73.7,21.2 73.6,21.0 69.9,20.4 69.5,21.1 70.6,25.1" stroke-width="0.37" stroke-opacity="0.14"/><polygon points="70.6,25.6 72.5,25.7 74.6,22.3 73.7,21.2 70.6,25.1" stroke-width="0.38" stroke-opacity="0.15"/><polygon points="78.1,22.5 80.2,21.2 75.7,17.7 75.3,17.8 73.6,21.0 73.7,21.2 74.6,22.3 75.6,22.9" stroke-width="0.36" stroke-opacity="0.14"/><polygon points="88.0,19.4 85.6,18.9 82.8,21.5 84.5,24.4 89.3,22.6" stroke-width="0.37" stroke-opacity="0.14"/><polygon points="90.4,22.6 95.3,22.4 94.9,19.1 92.4,18.8" stroke-width="0.36" stroke-opacity="0.14"/><polygon points="95.3,18.4 94.9,19.1 95.3,22.4 96.1,23.5 98.2,23.8 100.4,21.4 99.7,19.8 96.9,18.0" stroke-width="0.36" stroke-opacity="0.14"/><polygon points="103.8,20.1 103.3,21.1 105.1,24.8 105.9,25.5 107.3,22.9 107.6,19.3" stroke-width="0.37" stroke-opacity="0.14"/><polygon points="107.6,19.3 107.6,19.3 107.3,22.9 109.6,21.9 109.1,19.3 108.6,19.2" stroke-width="0.36" stroke-opacity="0.14"/><polygon points="109.6,21.9 110.7,23.3 112.6,20.6 111.0,18.7 109.1,19.3" stroke-width="0.36" stroke-opacity="0.14"/><polygon points="116.7,21.0 120.8,22.0 120.4,19.8 118.3,18.8" stroke-width="0.36" stroke-opacity="0.14"/><polygon points="124.8,21.3 120.4,19.8 120.8,22.0 124.5,23.1 124.6,23.0 125.2,21.7 125.2,21.7" stroke-width="0.37" stroke-opacity="0.14"/><polygon points="126.9,21.2 132.5,23.1 132.5,23.0 132.9,20.6 130.1,19.5 126.9,21.1" stroke-width="0.37" stroke-opacity="0.14"/><polygon points="136.5,18.9 133.8,18.6 132.9,20.6 132.5,23.0 136.9,22.1 137.3,20.0" stroke-width="0.36" stroke-opacity="0.14"/><polygon points="136.9,22.1 139.0,25.4 139.7,24.6 141.0,20.0 137.3,20.0" stroke-width="0.37" stroke-opacity="0.14"/><polygon points="144.8,23.3 147.2,24.1 147.8,23.3 147.8,20.0 146.8,18.6 146.3,18.5 143.7,21.4 144.6,23.2" stroke-width="0.37" stroke-opacity="0.14"/><polygon points="151.5,18.9 147.8,20.0 147.8,23.3 153.7,21.8 153.5,19.6 152.8,19.0" stroke-width="0.36" stroke-opacity="0.14"/><polygon points="158.0,24.1 161.0,21.7 158.8,19.6 154.1,22.4 155.0,23.9" stroke-width="0.37" stroke-opacity="0.14"/><polygon points="161.1,21.7 161.9,22.2 166.5,19.9 166.1,19.1 162.8,18.1 162.7,18.1 161.9,19.8" stroke-width="0.36" stroke-opacity="0.14"/><polygon points="162.7,23.1 168.4,21.5 166.5,19.9 161.9,22.2" stroke-width="0.37" stroke-opacity="0.14"/><polygon points="171.6,19.9 176.1,25.0 177.8,23.5 177.2,21.0 173.5,18.6 171.9,19.4" stroke-width="0.37" stroke-opacity="0.14"/><polygon points="181.4,21.9 181.0,19.2 178.5,19.4 177.2,21.0 177.8,23.5 180.6,23.5" stroke-width="0.37" stroke-opacity="0.14"/><polygon points="186.0,21.1 186.0,21.0 186.0,20.0 181.4,18.5 181.0,19.2 181.4,21.9" stroke-width="0.36" stroke-opacity="0.14"/><polygon points="188.8,24.8 191.3,24.3 191.7,23.1 191.4,21.5 186.0,21.0 186.0,21.1 186.1,22.8" stroke-width="0.37" stroke-opacity="0.15"/><polygon points="193.8,19.8 192.6,19.9 191.7,20.6 191.4,21.5 191.7,23.1 194.0,23.1 194.0,19.9" stroke-width="0.37" stroke-opacity="0.14"/><polygon points="-0.7,24.4 -1.5,21.1 -3.0,22.0 -3.0,27.2" stroke-width="0.38" stroke-opacity="0.15"/><polygon points="3.1,26.3 6.3,23.5 5.6,22.3 4.0,20.7 2.9,20.9 2.2,25.6" stroke-width="0.37" stroke-opacity="0.15"/><polygon points="13.3,22.3 12.2,21.8 8.9,23.2 8.2,23.9 8.4,24.3 14.0,25.3" stroke-width="0.38" stroke-opacity="0.15"/><polygon points="15.0,27.1 18.2,23.4 14.2,21.7 13.3,22.3 14.0,25.3" stroke-width="0.38" stroke-opacity="0.15"/><polygon points="24.3,21.9 21.3,24.6 22.1,27.4 25.7,26.5 26.0,26.2" stroke-width="0.38" stroke-opacity="0.16"/><polygon points="28.3,21.4 27.2,20.8 24.9,20.7 24.3,21.9 26.0,26.2 28.5,24.9" stroke-width="0.37" stroke-opacity="0.15"/><polygon points="36.7,28.1 37.1,27.8 37.5,26.0 35.5,23.3 34.1,22.8 31.9,26.9 32.1,28.0" stroke-width="0.39" stroke-opacity="0.16"/><polygon points="39.9,22.2 35.5,23.3 37.5,26.0 40.5,24.5 40.5,22.6" stroke-width="0.38" stroke-opacity="0.15"/><polygon points="40.5,22.6 40.5,24.5 42.7,27.8 44.2,27.4 44.8,26.6 45.2,23.3 44.6,22.3 40.9,22.4" stroke-width="0.38" stroke-opacity="0.15"/><polygon points="49.8,25.6 50.2,23.3 45.2,23.3 44.8,26.6" stroke-width="0.38" stroke-opacity="0.15"/><polygon points="57.1,24.3 56.2,22.9 52.8,23.7 55.4,28.2 56.1,27.7" stroke-width="0.38" stroke-opacity="0.16"/><polygon points="67.2,22.5 62.8,22.6 62.7,23.1 63.2,25.7 68.8,27.4 69.1,27.0" stroke-width="0.38" stroke-opacity="0.15"/><polygon points="69.5,21.1 67.2,22.5 69.1,27.0 70.6,25.6 70.6,25.1" stroke-width="0.38" stroke-opacity="0.15"/><polygon points="75.6,22.9 74.6,22.3 72.5,25.7 75.6,27.8" stroke-width="0.38" stroke-opacity="0.16"/><polygon points="84.5,24.4 82.8,21.5 80.6,21.1 80.5,21.1 80.1,27.9 82.2,28.5 84.4,28.1" stroke-width="0.38" stroke-opacity="0.16"/><polygon points="84.5,24.4 84.4,28.1 85.1,28.6 90.1,25.1 89.7,22.9 89.3,22.6" stroke-width="0.38" stroke-opacity="0.16"/><polygon points="90.1,25.1 93.1,27.9 96.1,23.5 95.3,22.4 90.4,22.6 89.7,22.9" stroke-width="0.38" stroke-opacity="0.15"/><polygon points="100.4,21.4 98.2,23.8 99.1,25.2 105.1,24.8 103.3,21.1" stroke-width="0.37" stroke-opacity="0.15"/><polygon points="107.3,22.9 105.9,25.5 106.4,26.7 108.1,27.4 110.8,24.7 110.7,23.3 109.6,21.9" stroke-width="0.38" stroke-opacity="0.15"/><polygon points="110.8,24.7 112.8,24.7 116.2,22.8 116.3,21.5 112.6,20.6 110.7,23.3" stroke-width="0.37" stroke-opacity="0.15"/><polygon points="122.4,26.1 124.5,23.1 120.8,22.0 116.7,21.0 116.7,21.1 116.3,21.5 116.2,22.8 118.8,27.9" stroke-width="0.38" stroke-opacity="0.15"/><polygon points="124.6,23.0 128.7,26.8 129.9,27.0 132.5,24.6 132.5,23.1 126.9,21.2 125.2,21.7" stroke-width="0.38" stroke-opacity="0.15"/><polygon points="132.5,23.0 132.5,23.1 132.5,24.6 136.8,27.7 138.8,26.8 139.0,25.4 136.9,22.1" stroke-width="0.38" stroke-opacity="0.15"/><polygon points="144.6,23.2 143.7,21.4 141.4,19.7 141.0,20.0 139.7,24.6" stroke-width="0.37" stroke-opacity="0.14"/><polygon points="154.1,22.4 153.7,21.8 147.8,23.3 147.2,24.1 147.9,27.9 148.2,28.0 154.1,25.9 155.0,23.9" stroke-width="0.38" stroke-opacity="0.15"/><polygon points="161.1,21.7 161.0,21.7 158.0,24.1 161.4,29.7 162.6,29.5 164.4,26.5 162.7,23.1 161.9,22.2" stroke-width="0.39" stroke-opacity="0.16"/><polygon points="164.4,26.5 168.9,24.8 169.0,24.7 169.2,21.9 168.4,21.5 162.7,23.1" stroke-width="0.38" stroke-opacity="0.15"/><polygon points="176.1,25.0 176.1,25.0 171.6,19.9 169.2,21.9 169.0,24.7 170.7,25.8" stroke-width="0.37" stroke-opacity="0.15"/><polygon points="186.1,22.8 186.0,21.1 181.4,21.9 180.6,23.5 183.1,26.9 183.3,26.9" stroke-width="0.38" stroke-opacity="0.15"/><polygon points="186.2,28.5 186.5,28.4 188.8,24.8 186.1,22.8 183.3,26.9" stroke-width="0.39" stroke-opacity="0.16"/><polygon points="191.7,23.1 191.3,24.3 192.2,26.4 194.0,26.8 194.0,23.1" stroke-width="0.38" stroke-opacity="0.15"/><polygon points="-0.7,24.4 -3.0,27.2 -3.0,30.6 -2.6,31.2 -1.1,31.8 3.2,27.2 3.1,26.3 2.2,25.6" stroke-width="0.40" stroke-opacity="0.17"/><polygon points="3.2,27.2 5.6,29.1 9.3,28.4 8.4,24.3 8.2,23.9 6.3,23.5 3.1,26.3" stroke-width="0.39" stroke-opacity="0.16"/><polygon points="8.4,24.3 9.3,28.4 12.3,30.5 13.5,30.4 14.9,28.1 15.0,27.1 14.0,25.3" stroke-width="0.40" stroke-opacity="0.17"/><polygon points="14.9,28.1 21.8,28.0 22.1,27.4 21.3,24.6 19.1,22.9 18.2,23.4 15.0,27.1" stroke-width="0.39" stroke-opacity="0.16"/><polygon points="22.1,27.4 21.8,28.0 21.8,28.0 27.0,33.8 28.6,31.7 25.7,26.5" stroke-width="0.41" stroke-opacity="0.18"/><polygon points="31.9,26.9 28.5,24.9 26.0,26.2 25.7,26.5 28.6,31.7 31.3,30.1 32.1,28.0" stroke-width="0.40" stroke-opacity="0.17"/><polygon points="41.7,29.2 42.7,27.8 40.5,24.5 37.5,26.0 37.1,27.8" stroke-width="0.39" stroke-opacity="0.17"/><polygon points="44.2,27.4 49.3,31.8 50.0,31.8 51.6,30.0 49.8,25.6 44.8,26.6" stroke-width="0.40" stroke-opacity="0.17"/><polygon points="52.8,23.7 50.4,22.9 50.2,23.3 49.8,25.6 51.6,30.0 54.1,29.4 55.4,28.2" stroke-width="0.39" stroke-opacity="0.16"/><polygon points="61.7,29.2 63.2,25.7 62.7,23.1 57.1,24.3 56.1,27.7" stroke-width="0.39" stroke-opacity="0.16"/><polygon points="69.1,27.0 68.8,27.4 69.0,28.2 75.7,29.8 76.2,28.8 75.6,27.8 72.5,25.7 70.6,25.6" stroke-width="0.40" stroke-opacity="0.17"/><polygon points="76.2,28.8 78.2,28.0 78.1,22.5 75.6,22.9 75.6,27.8" stroke-width="0.39" stroke-opacity="0.16"/><polygon points="80.1,27.9 80.5,21.1 80.2,21.2 78.1,22.5 78.2,28.0" stroke-width="0.38" stroke-opacity="0.15"/><polygon points="85.1,28.6 86.8,30.9 92.9,28.6 93.1,28.3 93.1,27.9 90.1,25.1" stroke-width="0.40" stroke-opacity="0.17"/><polygon points="99.1,25.2 98.2,23.8 96.1,23.5 93.1,27.9 93.1,28.3 99.8,30.9 100.1,30.7" stroke-width="0.40" stroke-opacity="0.17"/><polygon points="105.1,24.8 99.1,25.2 100.1,30.7 100.9,30.7 106.4,26.7 105.9,25.5" stroke-width="0.40" stroke-opacity="0.17"/><polygon points="109.6,29.8 110.8,30.5 114.7,29.1 112.8,24.7 110.8,24.7 108.1,27.4" stroke-width="0.40" stroke-opacity="0.17"/><polygon points="118.8,27.9 116.2,22.8 112.8,24.7 114.7,29.1 118.3,29.0" stroke-width="0.39" stroke-opacity="0.16"/><polygon points="124.5,23.1 122.4,26.1 125.8,30.2 128.7,26.8 124.6,23.0" stroke-width="0.39" stroke-opacity="0.16"/><polygon points="134.9,31.6 136.8,27.7 132.5,24.6 129.9,27.0 131.5,31.2" stroke-width="0.40" stroke-opacity="0.17"/><polygon points="139.0,25.4 138.8,26.8 139.0,26.9 142.0,27.7 144.8,23.3 144.6,23.2 139.7,24.6" stroke-width="0.39" stroke-opacity="0.16"/><polygon points="142.0,27.7 145.8,29.9 147.9,27.9 147.2,24.1 144.8,23.3" stroke-width="0.39" stroke-opacity="0.16"/><polygon points="153.5,31.0 155.1,28.8 154.1,25.9 148.2,28.0 151.8,31.2" stroke-width="0.40" stroke-opacity="0.17"/><polygon points="154.1,25.9 155.1,28.8 160.1,30.6 161.4,29.7 158.0,24.1 155.0,23.9" stroke-width="0.40" stroke-opacity="0.17"/><polygon points="171.5,33.9 172.4,29.7 170.7,25.8 169.0,24.7 168.9,24.8 168.3,31.7" stroke-width="0.41" stroke-opacity="0.18"/><polygon points="172.4,29.7 176.5,27.3 176.1,25.0 170.7,25.8" stroke-width="0.39" stroke-opacity="0.17"/><polygon points="180.6,23.5 177.8,23.5 176.1,25.0 176.1,25.0 176.5,27.3 179.3,30.6 183.1,26.9" stroke-width="0.39" stroke-opacity="0.16"/><polygon points="191.3,24.3 188.8,24.8 186.5,28.4 188.0,28.5 192.2,26.4 192.2,26.4" stroke-width="0.39" stroke-opacity="0.16"/><polygon points="188.0,28.5 191.6,30.4 192.2,26.4" stroke-width="0.40" stroke-opacity="0.17"/><polygon points="-2.6,31.2 -3.0,30.6 -3.0,31.7" stroke-width="0.42" stroke-opacity="0.19"/><polygon points="0.5,33.6 5.1,31.6 5.6,29.1 3.2,27.2 -1.1,31.8" stroke-width="0.42" stroke-opacity="0.18"/><polygon points="5.1,31.6 8.1,34.8 8.7,34.6 12.3,30.5 9.3,28.4 5.6,29.1" stroke-width="0.42" stroke-opacity="0.19"/><polygon points="21.8,28.0 14.9,28.1 13.5,30.4 16.3,33.9 20.5,31.4 21.8,28.0" stroke-width="0.42" stroke-opacity="0.18"/><polygon points="20.5,31.4 25.3,36.2 27.0,33.9 27.0,33.8 21.8,28.0" stroke-width="0.43" stroke-opacity="0.19"/><polygon points="31.3,30.1 35.5,33.7 37.2,32.4 36.7,28.1 32.1,28.0" stroke-width="0.42" stroke-opacity="0.18"/><polygon points="41.3,31.9 41.7,29.2 37.1,27.8 36.7,28.1 37.2,32.4" stroke-width="0.42" stroke-opacity="0.18"/><polygon points="42.7,27.8 41.7,29.2 41.3,31.9 43.1,34.7 43.5,34.7 49.3,31.8 44.2,27.4" stroke-width="0.42" stroke-opacity="0.19"/><polygon points="55.4,28.2 54.1,29.4 57.8,34.2 61.8,29.8 61.7,29.2 56.1,27.7" stroke-width="0.42" stroke-opacity="0.18"/><polygon points="63.2,25.7 61.7,29.2 61.8,29.8 65.6,33.2 67.6,33.3 69.0,28.2 68.8,27.4" stroke-width="0.41" stroke-opacity="0.18"/><polygon points="75.7,29.8 69.0,28.2 67.6,33.3 69.1,34.6 73.1,32.7 75.6,30.3" stroke-width="0.42" stroke-opacity="0.19"/><polygon points="80.1,27.9 78.2,28.0 76.2,28.8 75.7,29.8 75.6,30.3 79.2,34.8 79.9,34.9 82.2,28.5" stroke-width="0.42" stroke-opacity="0.18"/><polygon points="92.9,28.6 86.8,30.9 87.0,34.6 90.1,34.8 93.1,32.7" stroke-width="0.43" stroke-opacity="0.19"/><polygon points="99.8,30.9 93.1,28.3 92.9,28.6 93.1,32.7 97.5,35.1" stroke-width="0.43" stroke-opacity="0.19"/><polygon points="109.6,29.8 108.1,27.4 106.4,26.7 100.9,30.7 105.0,34.5" stroke-width="0.42" stroke-opacity="0.18"/><polygon points="119.5,33.6 119.5,33.5 118.3,29.0 114.7,29.1 110.8,30.5 111.6,33.5 113.2,34.2" stroke-width="0.43" stroke-opacity="0.19"/><polygon points="119.5,33.5 123.6,35.2 125.9,32.2 125.8,30.2 122.4,26.1 118.8,27.9 118.3,29.0" stroke-width="0.42" stroke-opacity="0.18"/><polygon points="130.6,31.8 131.5,31.2 129.9,27.0 128.7,26.8 125.8,30.2 125.9,32.2" stroke-width="0.41" stroke-opacity="0.18"/><polygon points="140.6,31.7 139.0,26.9 138.8,26.8 136.8,27.7 134.9,31.6 136.3,34.5" stroke-width="0.42" stroke-opacity="0.18"/><polygon points="145.2,33.0 145.8,29.9 142.0,27.7 139.0,26.9 140.6,31.7" stroke-width="0.41" stroke-opacity="0.18"/><polygon points="150.2,35.2 151.8,31.2 148.2,28.0 147.9,27.9 145.8,29.9 145.2,33.0 145.3,34.0" stroke-width="0.43" stroke-opacity="0.19"/><polygon points="158.1,35.0 160.1,30.6 155.1,28.8 153.5,31.0 155.4,34.0" stroke-width="0.43" stroke-opacity="0.19"/><polygon points="168.3,31.7 168.9,24.8 164.4,26.5 162.6,29.5 164.1,30.8" stroke-width="0.40" stroke-opacity="0.17"/><polygon points="179.3,30.6 176.5,27.3 172.4,29.7 171.5,33.9 171.9,34.8 175.3,34.5 179.0,32.1 179.2,31.1" stroke-width="0.42" stroke-opacity="0.19"/><polygon points="186.2,28.5 183.3,26.9 183.1,26.9 179.3,30.6 179.2,31.1 186.4,31.6" stroke-width="0.41" stroke-opacity="0.18"/><polygon points="187.4,35.2 187.4,35.2 189.8,34.1 192.1,31.8 191.6,30.4 188.0,28.5 186.5,28.4 186.2,28.5 186.4,31.6" stroke-width="0.43" stroke-opacity="0.19"/><polygon points="192.2,26.4 192.2,26.4 191.6,30.4 192.1,31.8 194.0,31.9 194.0,26.8" stroke-width="0.41" stroke-opacity="0.18"/><polygon points="-1.1,39.6 0.9,35.3 0.5,33.6 -1.1,31.8 -2.6,31.2 -3.0,31.7 -3.0,39.5" stroke-width="0.46" stroke-opacity="0.21"/><polygon points="0.5,33.6 0.9,35.3 5.7,36.9 8.1,34.8 5.1,31.6" stroke-width="0.45" stroke-opacity="0.21"/><polygon points="12.3,30.5 8.7,34.6 14.3,42.0 17.0,36.7 16.3,33.9 13.5,30.4" stroke-width="0.46" stroke-opacity="0.21"/><polygon points="16.3,33.9 17.0,36.7 25.0,36.8 25.3,36.2 20.5,31.4" stroke-width="0.45" stroke-opacity="0.21"/><polygon points="28.6,31.7 27.0,33.8 27.0,33.9 35.0,37.6 35.2,37.4 35.5,33.7 31.3,30.1" stroke-width="0.44" stroke-opacity="0.20"/><polygon points="35.5,33.7 35.2,37.4 40.7,38.7 43.1,34.7 41.3,31.9 37.2,32.4" stroke-width="0.46" stroke-opacity="0.21"/><polygon points="47.6,38.3 50.9,34.6 50.0,31.8 49.3,31.8 43.5,34.7" stroke-width="0.45" stroke-opacity="0.21"/><polygon points="50.0,31.8 50.9,34.6 55.9,39.2 57.7,38.5 57.8,34.2 54.1,29.4 51.6,30.0" stroke-width="0.45" stroke-opacity="0.20"/><polygon points="57.8,34.2 57.7,38.5 60.0,39.0 65.6,33.2 61.8,29.8" stroke-width="0.45" stroke-opacity="0.21"/><polygon points="78.3,35.5 79.2,34.8 75.6,30.3 73.1,32.7 75.8,36.1" stroke-width="0.44" stroke-opacity="0.20"/><polygon points="75.8,36.1 73.1,32.7 69.1,34.6 70.4,39.5 71.8,40.0" stroke-width="0.47" stroke-opacity="0.22"/><polygon points="84.4,28.1 82.2,28.5 79.9,34.9 84.6,37.9 87.0,34.6 86.8,30.9 85.1,28.6" stroke-width="0.44" stroke-opacity="0.20"/><polygon points="97.5,35.1 93.1,32.7 90.1,34.8 95.9,40.0 97.4,36.8" stroke-width="0.46" stroke-opacity="0.21"/><polygon points="105.5,36.8 105.0,34.5 100.9,30.7 100.1,30.7 99.8,30.9 97.5,35.1 97.4,36.8 105.1,37.4" stroke-width="0.45" stroke-opacity="0.21"/><polygon points="110.8,30.5 109.6,29.8 105.0,34.5 105.5,36.8 109.7,36.7 111.6,33.5" stroke-width="0.44" stroke-opacity="0.20"/><polygon points="115.4,40.0 119.5,33.6 113.2,34.2" stroke-width="0.46" stroke-opacity="0.21"/><polygon points="130.2,37.1 130.6,31.8 125.9,32.2 123.6,35.2 123.8,35.9 127.1,39.2 128.1,39.0" stroke-width="0.46" stroke-opacity="0.21"/><polygon points="136.3,34.5 134.9,31.6 131.5,31.2 130.6,31.8 130.2,37.1 136.5,35.9" stroke-width="0.45" stroke-opacity="0.20"/><polygon points="137.4,37.2 143.7,36.9 145.3,34.0 145.2,33.0 140.6,31.7 136.3,34.5 136.5,35.9" stroke-width="0.45" stroke-opacity="0.21"/><polygon points="155.4,34.0 153.5,31.0 151.8,31.2 150.2,35.2 150.8,35.8" stroke-width="0.44" stroke-opacity="0.20"/><polygon points="162.6,29.5 161.4,29.7 160.1,30.6 158.1,35.0 158.6,36.8 164.4,37.8 164.1,30.8" stroke-width="0.45" stroke-opacity="0.20"/><polygon points="164.4,37.8 166.7,39.5 171.2,36.3 171.9,34.8 171.5,33.9 168.3,31.7 164.1,30.8" stroke-width="0.45" stroke-opacity="0.21"/><polygon points="179.0,32.1 175.3,34.5 180.0,40.8 182.8,35.5" stroke-width="0.46" stroke-opacity="0.21"/><polygon points="179.2,31.1 179.0,32.1 182.8,35.5 187.4,35.2 186.4,31.6" stroke-width="0.44" stroke-opacity="0.20"/><polygon points="192.1,31.8 189.8,34.1 194.0,36.4 194.0,31.9" stroke-width="0.44" stroke-opacity="0.20"/><polygon points="6.2,40.9 5.7,36.9 0.9,35.3 -1.1,39.6 1.5,43.9 2.6,43.6" stroke-width="0.50" stroke-opacity="0.24"/><polygon points="14.2,42.8 14.3,42.0 8.7,34.6 8.1,34.8 5.7,36.9 6.2,40.9" stroke-width="0.49" stroke-opacity="0.23"/><polygon points="24.8,41.5 25.1,37.2 25.0,36.8 17.0,36.7 14.3,42.0 14.2,42.8 15.2,45.9" stroke-width="0.51" stroke-opacity="0.24"/><polygon points="25.0,36.8 25.1,37.2 33.2,40.6 35.0,37.6 27.0,33.9 25.3,36.2" stroke-width="0.48" stroke-opacity="0.22"/><polygon points="35.2,37.4 35.0,37.6 33.2,40.6 32.9,45.0 35.4,48.4 41.2,40.0 40.7,38.7" stroke-width="0.53" stroke-opacity="0.25"/><polygon points="40.7,38.7 41.2,40.0 46.0,43.2 47.8,41.8 47.6,38.3 43.5,34.7 43.1,34.7" stroke-width="0.49" stroke-opacity="0.23"/><polygon points="50.9,34.6 47.6,38.3 47.8,41.8 54.4,41.4 55.9,39.2" stroke-width="0.49" stroke-opacity="0.23"/><polygon points="65.6,33.2 60.0,39.0 64.1,42.9 65.6,43.0 70.4,39.5 69.1,34.6 67.6,33.3" stroke-width="0.49" stroke-opacity="0.23"/><polygon points="77.0,40.2 78.3,35.5 75.8,36.1 71.8,40.0 74.1,41.9" stroke-width="0.49" stroke-opacity="0.23"/><polygon points="83.9,40.0 84.7,39.3 84.6,37.9 79.9,34.9 79.2,34.8 78.3,35.5 77.0,40.2" stroke-width="0.48" stroke-opacity="0.23"/><polygon points="94.2,42.9 95.8,40.7 95.9,40.0 90.1,34.8 87.0,34.6 84.6,37.9 84.7,39.3 90.6,43.3 92.2,43.8" stroke-width="0.50" stroke-opacity="0.23"/><polygon points="97.4,36.8 95.9,40.0 95.8,40.7 104.5,42.8 105.1,37.4" stroke-width="0.50" stroke-opacity="0.24"/><polygon points="105.5,36.8 105.1,37.4 104.5,42.8 105.3,44.0 112.5,40.8 109.7,36.7" stroke-width="0.50" stroke-opacity="0.24"/><polygon points="111.6,33.5 109.7,36.7 112.5,40.8 114.9,41.5 115.4,40.0 113.2,34.2" stroke-width="0.48" stroke-opacity="0.22"/><polygon points="116.3,43.5 117.1,44.5 123.8,35.9 123.6,35.2 119.5,33.5 119.5,33.6 115.4,40.0 114.9,41.5" stroke-width="0.49" stroke-opacity="0.23"/><polygon points="130.2,37.1 128.1,39.0 136.2,42.4 137.4,37.2 136.5,35.9" stroke-width="0.49" stroke-opacity="0.23"/><polygon points="136.2,42.4 136.4,43.5 145.1,40.6 143.7,36.9 137.4,37.2" stroke-width="0.50" stroke-opacity="0.24"/><polygon points="143.7,36.9 145.1,40.6 147.9,44.2 150.2,43.9 152.1,41.0 150.8,35.8 150.2,35.2 145.3,34.0" stroke-width="0.49" stroke-opacity="0.23"/><polygon points="158.1,35.0 155.4,34.0 150.8,35.8 152.1,41.0 157.3,39.2 158.6,36.8" stroke-width="0.48" stroke-opacity="0.22"/><polygon points="164.4,37.8 158.6,36.8 157.3,39.2 159.8,43.5 166.5,40.9 166.7,39.5" stroke-width="0.50" stroke-opacity="0.24"/><polygon points="180.0,42.4 180.0,40.8 175.3,34.5 171.9,34.8 171.2,36.3 175.0,42.2 178.5,43.2" stroke-width="0.49" stroke-opacity="0.23"/><polygon points="182.8,35.5 180.0,40.8 180.0,42.4 182.3,43.2 188.8,40.5 187.4,35.2 187.4,35.2" stroke-width="0.50" stroke-opacity="0.23"/><polygon points="194.0,42.3 194.0,36.4 189.8,34.1 187.4,35.2 188.8,40.5 193.0,43.5" stroke-width="0.49" stroke-opacity="0.23"/><polygon points="0.4,45.9 1.5,43.9 -1.1,39.6 -3.0,39.5 -3.0,45.6" stroke-width="0.54" stroke-opacity="0.26"/><polygon points="14.2,42.8 6.2,40.9 2.6,43.6 11.9,49.9 13.1,50.0 14.9,47.4 15.2,46.1 15.2,45.9" stroke-width="0.56" stroke-opacity="0.27"/><polygon points="24.8,41.5 15.2,45.9 15.2,46.1 25.5,47.2 27.0,44.3" stroke-width="0.56" stroke-opacity="0.27"/><polygon points="32.9,45.0 33.2,40.6 25.1,37.2 24.8,41.5 27.0,44.3" stroke-width="0.52" stroke-opacity="0.25"/><polygon points="45.0,45.6 45.9,44.4 46.0,43.2 41.2,40.0 35.4,48.4 35.7,49.5" stroke-width="0.56" stroke-opacity="0.27"/><polygon points="54.1,50.4 55.3,50.6 54.4,41.4 47.8,41.8 46.0,43.2 45.9,44.4" stroke-width="0.56" stroke-opacity="0.27"/><polygon points="56.0,51.4 58.2,50.5 64.1,42.9 60.0,39.0 57.7,38.5 55.9,39.2 54.4,41.4 55.3,50.6" stroke-width="0.55" stroke-opacity="0.27"/><polygon points="71.8,40.0 70.4,39.5 65.6,43.0 69.0,50.0 69.2,50.0 75.2,44.9 74.1,41.9" stroke-width="0.55" stroke-opacity="0.27"/><polygon points="75.2,44.9 80.1,47.7 83.9,40.0 77.0,40.2 74.1,41.9" stroke-width="0.54" stroke-opacity="0.26"/><polygon points="81.2,50.6 81.9,50.6 90.6,43.3 84.7,39.3 83.9,40.0 80.1,47.7" stroke-width="0.56" stroke-opacity="0.27"/><polygon points="95.8,40.7 94.2,42.9 98.8,48.2 105.3,44.3 105.3,44.0 104.5,42.8" stroke-width="0.55" stroke-opacity="0.27"/><polygon points="112.5,40.8 105.3,44.0 105.3,44.3 106.3,46.4 116.3,43.5 114.9,41.5" stroke-width="0.54" stroke-opacity="0.26"/><polygon points="118.1,46.8 121.7,47.6 126.2,44.1 127.1,39.2 123.8,35.9 117.1,44.5" stroke-width="0.53" stroke-opacity="0.26"/><polygon points="136.2,42.4 128.1,39.0 127.1,39.2 126.2,44.1 135.9,48.2 136.2,47.9 136.4,43.5" stroke-width="0.54" stroke-opacity="0.26"/><polygon points="147.9,44.2 145.1,40.6 136.4,43.5 136.2,47.9 143.6,47.5 146.4,45.9" stroke-width="0.56" stroke-opacity="0.27"/><polygon points="159.2,46.3 159.8,43.5 157.3,39.2 152.1,41.0 150.2,43.9 152.1,45.7" stroke-width="0.54" stroke-opacity="0.26"/><polygon points="166.5,40.9 159.8,43.5 159.2,46.3 162.5,52.0 168.1,50.8 168.4,46.7" stroke-width="0.58" stroke-opacity="0.28"/><polygon points="171.2,36.3 166.7,39.5 166.5,40.9 168.4,46.7 175.0,42.2" stroke-width="0.52" stroke-opacity="0.25"/><polygon points="187.2,50.5 193.2,44.6 193.0,43.5 188.8,40.5 182.3,43.2 185.2,49.8" stroke-width="0.56" stroke-opacity="0.27"/><polygon points="193.0,43.5 193.2,44.6 194.0,45.2 194.0,42.3" stroke-width="0.55" stroke-opacity="0.27"/><polygon points="0.6,49.9 0.4,45.9 -3.0,45.6 -3.0,52.1" stroke-width="0.61" stroke-opacity="0.30"/><polygon points="1.5,43.9 0.4,45.9 0.6,49.9 3.6,52.1 11.9,49.9 2.6,43.6" stroke-width="0.60" stroke-opacity="0.30"/><polygon points="15.2,46.1 14.9,47.4 25.5,52.9 25.7,52.8 25.5,47.2" stroke-width="0.61" stroke-opacity="0.30"/><polygon points="25.5,47.2 25.7,52.8 32.5,52.5 35.6,50.6 35.7,49.5 35.4,48.4 32.9,45.0 27.0,44.3" stroke-width="0.61" stroke-opacity="0.30"/><polygon points="35.6,50.6 41.4,56.4 42.5,55.8 46.1,51.8 45.0,45.6 35.7,49.5" stroke-width="0.64" stroke-opacity="0.32"/><polygon points="46.1,51.8 54.1,50.4 45.9,44.4 45.0,45.6" stroke-width="0.61" stroke-opacity="0.30"/><polygon points="65.6,43.0 64.1,42.9 58.2,50.5 66.6,51.7 69.0,50.0" stroke-width="0.60" stroke-opacity="0.29"/><polygon points="79.0,54.1 81.2,50.6 80.1,47.7 75.2,44.9 69.2,50.0 75.3,55.8" stroke-width="0.63" stroke-opacity="0.31"/><polygon points="90.6,43.3 81.9,50.6 88.5,52.6 91.1,51.1 92.2,43.8" stroke-width="0.61" stroke-opacity="0.30"/><polygon points="91.1,51.1 97.7,54.1 98.9,51.9 98.8,48.2 94.2,42.9 92.2,43.8" stroke-width="0.61" stroke-opacity="0.30"/><polygon points="105.3,44.3 98.8,48.2 98.9,51.9 107.7,50.1 106.3,46.4" stroke-width="0.61" stroke-opacity="0.30"/><polygon points="107.7,50.1 111.4,53.7 118.1,46.8 117.1,44.5 116.3,43.5 106.3,46.4" stroke-width="0.60" stroke-opacity="0.29"/><polygon points="126.2,44.1 121.7,47.6 125.8,54.4 135.8,48.8 135.9,48.2" stroke-width="0.61" stroke-opacity="0.30"/><polygon points="143.6,47.5 136.2,47.9 135.9,48.2 135.8,48.8 137.6,55.6 145.4,57.5" stroke-width="0.66" stroke-opacity="0.32"/><polygon points="153.2,50.4 152.1,45.7 150.2,43.9 147.9,44.2 146.4,45.9 149.0,52.5" stroke-width="0.60" stroke-opacity="0.29"/><polygon points="153.2,50.4 156.7,53.9 160.0,54.5 162.5,52.0 159.2,46.3 152.1,45.7" stroke-width="0.63" stroke-opacity="0.31"/><polygon points="175.0,42.2 168.4,46.7 168.1,50.8 170.3,52.3 173.5,52.4 176.0,51.4 178.5,43.2" stroke-width="0.60" stroke-opacity="0.29"/><polygon points="182.3,43.2 180.0,42.4 178.5,43.2 176.0,51.4 178.8,52.1 185.2,49.8" stroke-width="0.60" stroke-opacity="0.29"/><polygon points="188.7,55.0 194.0,55.6 194.0,45.2 193.2,44.6 187.2,50.5" stroke-width="0.64" stroke-opacity="0.32"/><polygon points="-2.1,60.0 3.4,57.8 3.6,52.1 0.6,49.9 -3.0,52.1 -3.0,59.3" stroke-width="0.70" stroke-opacity="0.35"/><polygon points="11.9,49.9 3.6,52.1 3.4,57.8 9.6,61.6 14.5,59.7 13.1,50.0" stroke-width="0.71" stroke-opacity="0.35"/><polygon points="14.9,47.4 13.1,50.0 14.5,59.7 19.5,62.5 23.0,58.4 25.5,52.9" stroke-width="0.70" stroke-opacity="0.35"/><polygon points="23.0,58.4 31.3,58.8 32.5,52.5 25.7,52.8 25.5,52.9" stroke-width="0.71" stroke-opacity="0.35"/><polygon points="55.4,57.5 56.0,56.3 56.0,51.4 55.3,50.6 54.1,50.4 46.1,51.8 42.5,55.8" stroke-width="0.69" stroke-opacity="0.34"/><polygon points="58.2,50.5 56.0,51.4 56.0,56.3 65.5,58.4 66.6,51.7" stroke-width="0.69" stroke-opacity="0.34"/><polygon points="69.2,50.0 69.0,50.0 66.6,51.7 65.5,58.4 68.7,62.4 72.2,61.6 75.3,55.8" stroke-width="0.72" stroke-opacity="0.36"/><polygon points="83.9,60.5 88.7,55.0 88.5,52.6 81.9,50.6 81.2,50.6 79.0,54.1" stroke-width="0.70" stroke-opacity="0.35"/><polygon points="93.4,61.6 94.6,62.3 97.8,54.8 97.7,54.1 91.1,51.1 88.5,52.6 88.7,55.0" stroke-width="0.71" stroke-opacity="0.35"/><polygon points="98.9,51.9 97.7,54.1 97.8,54.8 108.0,58.6 111.4,55.0 111.4,53.7 107.7,50.1" stroke-width="0.69" stroke-opacity="0.34"/><polygon points="125.8,54.4 121.7,47.6 118.1,46.8 111.4,53.7 111.4,55.0 121.8,61.9 122.5,61.5 125.6,56.4" stroke-width="0.69" stroke-opacity="0.34"/><polygon points="135.8,48.8 125.8,54.4 125.6,56.4 135.3,59.0 137.6,55.6" stroke-width="0.69" stroke-opacity="0.34"/><polygon points="149.0,52.5 146.4,45.9 143.6,47.5 145.4,57.5 146.9,58.6" stroke-width="0.65" stroke-opacity="0.32"/><polygon points="146.9,58.7 156.7,53.9 153.2,50.4 149.0,52.5 146.9,58.6" stroke-width="0.69" stroke-opacity="0.34"/><polygon points="168.1,50.8 162.5,52.0 160.0,54.5 160.0,56.6 166.3,62.1 169.4,60.3 170.3,52.3" stroke-width="0.72" stroke-opacity="0.35"/><polygon points="173.5,52.4 178.5,63.8 181.9,64.0 184.5,62.1 184.6,61.6 178.8,52.1 176.0,51.4" stroke-width="0.75" stroke-opacity="0.37"/><polygon points="178.8,52.1 184.6,61.6 188.7,55.0 187.2,50.5 185.2,49.8" stroke-width="0.69" stroke-opacity="0.34"/><polygon points="-1.4,68.1 -2.1,60.0 -3.0,59.3 -3.0,70.1 -2.0,69.7" stroke-width="0.87" stroke-opacity="0.43"/><polygon points="8.9,62.7 9.6,61.6 3.4,57.8 -2.1,60.0 -1.4,68.1" stroke-width="0.82" stroke-opacity="0.41"/><polygon points="19.5,62.5 22.4,68.5 32.4,62.7 31.3,58.8 23.0,58.4" stroke-width="0.82" stroke-opacity="0.41"/><polygon points="32.5,52.5 31.3,58.8 32.4,62.7 36.9,63.5 41.2,60.8 41.4,56.4 35.6,50.6" stroke-width="0.74" stroke-opacity="0.37"/><polygon points="41.4,56.4 41.2,60.8 47.8,66.3 54.2,64.7 55.4,57.5 42.5,55.8" stroke-width="0.79" stroke-opacity="0.39"/><polygon points="65.5,58.4 56.0,56.3 55.4,57.5 54.2,64.7 59.4,69.2 65.5,66.6 68.7,62.4" stroke-width="0.82" stroke-opacity="0.41"/><polygon points="72.2,61.6 75.6,64.7 82.6,64.5 84.0,60.8 83.9,60.5 79.0,54.1 75.3,55.8" stroke-width="0.78" stroke-opacity="0.39"/><polygon points="84.0,60.8 93.4,61.6 88.7,55.0 83.9,60.5" stroke-width="0.77" stroke-opacity="0.38"/><polygon points="94.6,62.3 97.3,70.8 100.6,70.8 105.2,68.9 108.0,58.6 97.8,54.8" stroke-width="0.83" stroke-opacity="0.41"/><polygon points="135.3,59.0 125.6,56.4 122.5,61.5 129.5,64.3 135.3,61.5" stroke-width="0.79" stroke-opacity="0.39"/><polygon points="146.9,58.7 146.9,58.6 145.4,57.5 137.6,55.6 135.3,59.0 135.3,61.5 140.6,69.1 147.4,66.3 148.0,64.9" stroke-width="0.81" stroke-opacity="0.40"/><polygon points="157.4,62.5 160.0,56.6 160.0,54.5 156.7,53.9 146.9,58.7 148.0,64.9" stroke-width="0.77" stroke-opacity="0.38"/><polygon points="163.3,69.0 163.8,69.0 166.3,62.1 160.0,56.6 157.4,62.5" stroke-width="0.83" stroke-opacity="0.41"/><polygon points="170.3,52.3 169.4,60.3 174.9,65.2 178.5,63.8 173.5,52.4" stroke-width="0.76" stroke-opacity="0.38"/><polygon points="188.7,55.0 184.6,61.6 184.5,62.1 194.0,66.2 194.0,55.6" stroke-width="0.78" stroke-opacity="0.39"/><polygon points="9.1,75.8 8.9,62.7 -1.4,68.1 -2.0,69.7 8.3,76.2" stroke-width="0.95" stroke-opacity="0.47"/><polygon points="14.5,59.7 9.6,61.6 8.9,62.7 9.1,75.8 20.6,74.9 22.4,73.0 22.5,72.6 22.4,68.5 19.5,62.5" stroke-width="0.93" stroke-opacity="0.46"/><polygon points="22.5,72.6 36.5,69.8 36.9,63.5 32.4,62.7 22.4,68.5" stroke-width="0.92" stroke-opacity="0.45"/><polygon points="47.8,66.3 41.2,60.8 36.9,63.5 36.5,69.8 41.7,76.2 44.2,75.0" stroke-width="0.93" stroke-opacity="0.46"/><polygon points="75.6,64.7 72.2,61.6 68.7,62.4 65.5,66.6 70.5,72.3 75.8,70.0" stroke-width="0.90" stroke-opacity="0.44"/><polygon points="86.5,71.0 82.6,64.5 75.6,64.7 75.8,70.0 79.5,74.0" stroke-width="0.94" stroke-opacity="0.46"/><polygon points="82.6,64.5 86.5,71.0 93.9,73.2 97.3,70.8 94.6,62.3 93.4,61.6 84.0,60.8" stroke-width="0.90" stroke-opacity="0.44"/><polygon points="105.2,68.9 118.2,72.6 121.8,61.9 111.4,55.0 108.0,58.6" stroke-width="0.86" stroke-opacity="0.42"/><polygon points="129.5,64.3 122.5,61.5 121.8,61.9 118.2,72.6 118.6,73.3 131.8,71.0" stroke-width="0.92" stroke-opacity="0.45"/><polygon points="140.6,69.1 135.3,61.5 129.5,64.3 131.8,71.0 137.6,73.2" stroke-width="0.91" stroke-opacity="0.45"/><polygon points="147.4,66.3 154.9,76.5 163.3,69.0 157.4,62.5 148.0,64.9" stroke-width="0.94" stroke-opacity="0.46"/><polygon points="169.1,71.4 170.5,71.5 174.9,65.2 169.4,60.3 166.3,62.1 163.8,69.0" stroke-width="0.89" stroke-opacity="0.44"/><polygon points="184.0,80.7 181.9,64.0 178.5,63.8 174.9,65.2 170.5,71.5 179.1,82.8" stroke-width="1.02" stroke-opacity="0.49"/><polygon points="0.4,90.5 2.5,90.3 8.3,76.2 -2.0,69.7 -3.0,70.1 -3.0,87.7" stroke-width="1.18" stroke-opacity="0.56"/><polygon points="41.7,76.2 36.5,69.8 22.5,72.6 22.4,73.0 37.5,82.4" stroke-width="1.07" stroke-opacity="0.52"/><polygon points="59.4,69.2 54.2,64.7 47.8,66.3 44.2,75.0 58.0,81.6 59.0,81.1" stroke-width="1.02" stroke-opacity="0.50"/><polygon points="65.5,66.6 59.4,69.2 59.0,81.1 64.2,82.8 70.2,77.0 70.5,72.3" stroke-width="1.06" stroke-opacity="0.51"/><polygon points="75.8,70.0 70.5,72.3 70.2,77.0 78.1,77.2 79.5,74.0" stroke-width="1.05" stroke-opacity="0.51"/><polygon points="78.1,77.2 80.7,85.9 91.2,83.7 93.9,73.2 86.5,71.0 79.5,74.0" stroke-width="1.14" stroke-opacity="0.55"/><polygon points="120.0,83.0 118.6,73.3 118.2,72.6 105.2,68.9 100.6,70.8 107.3,85.3 115.8,86.5 119.9,83.3" stroke-width="1.12" stroke-opacity="0.54"/><polygon points="131.8,71.0 118.6,73.3 120.0,83.0 132.6,81.0 137.6,77.4 137.6,73.2" stroke-width="1.10" stroke-opacity="0.53"/><polygon points="140.6,69.1 137.6,73.2 137.6,77.4 144.6,83.6 154.8,79.3 154.9,76.5 147.4,66.3" stroke-width="1.07" stroke-opacity="0.52"/><polygon points="154.9,76.5 154.8,79.3 160.8,85.1 169.1,71.4 163.8,69.0 163.3,69.0" stroke-width="1.09" stroke-opacity="0.53"/><polygon points="184.5,62.1 181.9,64.0 184.0,80.7 184.6,80.7 190.5,78.1 194.0,71.5 194.0,66.2" stroke-width="0.98" stroke-opacity="0.48"/><polygon points="190.5,78.1 194.0,79.6 194.0,71.5" stroke-width="1.09" stroke-opacity="0.53"/><polygon points="5.7,91.9 15.8,89.6 20.6,85.5 20.6,74.9 9.1,75.8 8.3,76.2 2.5,90.3" stroke-width="1.25" stroke-opacity="0.59"/><polygon points="22.4,73.0 20.6,74.9 20.6,85.5 35.6,94.6 37.6,85.0 37.5,82.4" stroke-width="1.26" stroke-opacity="0.60"/><polygon points="44.2,75.0 41.7,76.2 37.5,82.4 37.6,85.0 55.8,84.6 58.0,81.6" stroke-width="1.20" stroke-opacity="0.57"/><polygon points="70.2,77.0 64.2,82.8 73.7,93.4 80.7,85.9 78.1,77.2" stroke-width="1.26" stroke-opacity="0.60"/><polygon points="91.2,83.7 96.1,90.7 97.8,91.2 107.3,85.3 100.6,70.8 97.3,70.8 93.9,73.2" stroke-width="1.20" stroke-opacity="0.57"/><polygon points="132.6,81.0 120.0,83.0 119.9,83.3 129.4,94.6 133.4,96.9 135.1,92.7" stroke-width="1.36" stroke-opacity="0.64"/><polygon points="137.6,77.4 132.6,81.0 135.1,92.7 144.6,83.9 144.6,83.6" stroke-width="1.27" stroke-opacity="0.60"/><polygon points="154.8,79.3 144.6,83.6 144.6,83.9 149.0,96.2 158.1,93.6 162.7,88.3 160.8,85.1" stroke-width="1.36" stroke-opacity="0.64"/><polygon points="162.7,88.3 170.2,89.4 177.7,84.7 179.1,82.8 170.5,71.5 169.1,71.4 160.8,85.1" stroke-width="1.21" stroke-opacity="0.58"/><polygon points="190.5,78.1 184.6,80.7 192.2,90.9 194.0,91.5 194.0,79.6" stroke-width="1.26" stroke-opacity="0.60"/><polygon points="0.4,90.5 -3.0,87.7 -3.0,95.2" stroke-width="1.44" stroke-opacity="0.67"/><polygon points="20.6,85.5 15.8,89.6 25.2,104.7 36.7,99.5 35.6,94.6" stroke-width="1.55" stroke-opacity="0.71"/><polygon points="37.6,85.0 35.6,94.6 36.7,99.5 42.0,102.5 51.5,96.6 55.8,84.6" stroke-width="1.47" stroke-opacity="0.68"/><polygon points="59.0,81.1 58.0,81.6 55.8,84.6 51.5,96.6 69.7,100.7 73.6,94.2 73.7,93.4 64.2,82.8" stroke-width="1.46" stroke-opacity="0.68"/><polygon points="73.6,94.2 87.9,100.0 96.1,90.7 91.2,83.7 80.7,85.9 73.7,93.4" stroke-width="1.45" stroke-opacity="0.67"/><polygon points="107.3,85.3 97.8,91.2 107.0,104.3 111.9,104.3 113.3,101.1 115.8,86.5" stroke-width="1.52" stroke-opacity="0.70"/><polygon points="115.8,86.5 113.3,101.1 129.4,94.6 119.9,83.3" stroke-width="1.48" stroke-opacity="0.68"/><polygon points="135.1,92.7 133.4,96.9 137.5,106.3 142.8,104.7 149.0,96.2 144.6,83.9" stroke-width="1.57" stroke-opacity="0.72"/><polygon points="162.7,88.3 158.1,93.6 163.5,113.6 168.1,117.7 170.5,119.2 175.0,116.2 170.2,89.4" stroke-width="1.76" stroke-opacity="0.79"/><polygon points="185.4,99.0 192.2,90.9 184.6,80.7 184.0,80.7 179.1,82.8 177.7,84.7" stroke-width="1.39" stroke-opacity="0.65"/><polygon points="185.8,111.7 194.0,99.5 194.0,91.5 192.2,90.9 185.4,99.0" stroke-width="1.68" stroke-opacity="0.76"/><polygon points="-3.0,95.2 -3.0,105.2 5.5,112.1 14.0,109.0 5.7,91.9 2.5,90.3 0.4,90.5" stroke-width="1.73" stroke-opacity="0.78"/><polygon points="5.7,91.9 14.0,109.0 18.5,110.3 25.2,104.7 15.8,89.6" stroke-width="1.67" stroke-opacity="0.76"/><polygon points="69.7,107.6 69.7,100.7 51.5,96.6 42.0,102.5 45.9,112.7" stroke-width="1.80" stroke-opacity="0.81"/><polygon points="80.5,117.3 90.5,108.8 87.9,100.0 73.6,94.2 69.7,100.7 69.7,107.6 71.9,112.1" stroke-width="1.84" stroke-opacity="0.82"/><polygon points="96.1,90.7 87.9,100.0 90.5,108.8 99.2,110.1 107.0,104.3 97.8,91.2" stroke-width="1.72" stroke-opacity="0.78"/><polygon points="133.4,96.9 129.4,94.6 113.3,101.1 111.9,104.3 124.4,116.6 133.3,112.8 137.5,106.3" stroke-width="1.83" stroke-opacity="0.81"/><polygon points="158.1,93.6 149.0,96.2 142.8,104.7 163.5,113.6" stroke-width="1.77" stroke-opacity="0.79"/><polygon points="170.2,89.4 175.0,116.2 184.7,114.1 185.5,113.1 185.8,111.7 185.4,99.0 177.7,84.7" stroke-width="1.71" stroke-opacity="0.77"/><polygon points="185.5,113.1 194.0,110.1 194.0,99.5 185.8,111.7" stroke-width="1.90" stroke-opacity="0.84"/><polygon points="5.5,112.1 -3.0,105.2 -3.0,120.4 -0.1,119.8" stroke-width="2.07" stroke-opacity="0.90"/><polygon points="21.6,124.2 21.7,122.4 18.5,110.3 14.0,109.0 5.5,112.1 -0.1,119.8 4.9,125.0 20.3,125.0" stroke-width="2.22" stroke-opacity="0.96"/><polygon points="45.9,112.7 42.0,102.5 36.7,99.5 25.2,104.7 18.5,110.3 21.7,122.4 45.9,113.9" stroke-width="1.99" stroke-opacity="0.87"/><polygon points="71.9,112.1 69.7,107.6 45.9,112.7 45.9,113.9 48.9,125.0 59.8,125.0" stroke-width="2.17" stroke-opacity="0.94"/><polygon points="82.2,124.4 101.3,123.9 99.2,110.1 90.5,108.8 80.5,117.3" stroke-width="2.20" stroke-opacity="0.95"/><polygon points="124.4,116.6 111.9,104.3 107.0,104.3 99.2,110.1 101.3,123.9 102.4,125.0 120.7,125.0" stroke-width="2.15" stroke-opacity="0.93"/><polygon points="168.1,117.7 163.5,113.6 142.8,104.7 137.5,106.3 133.3,112.8 136.9,116.5 144.3,120.5" stroke-width="2.08" stroke-opacity="0.90"/><polygon points="170.5,119.2 168.1,117.7 144.3,120.5 146.4,125.0 169.2,125.0" stroke-width="2.35" stroke-opacity="1.00"/><polygon points="185.5,113.1 184.7,114.1 194.0,122.9 194.0,110.1" stroke-width="2.14" stroke-opacity="0.93"/><polygon points="-0.1,119.8 -3.0,120.4 -3.0,125.0 4.9,125.0" stroke-width="2.35" stroke-opacity="1.00"/><polygon points="45.9,113.9 21.7,122.4 21.6,124.2 22.4,125.0 48.9,125.0" stroke-width="2.32" stroke-opacity="0.99"/><polygon points="82.2,124.4 80.5,117.3 71.9,112.1 59.8,125.0 82.1,125.0" stroke-width="2.29" stroke-opacity="0.98"/><polygon points="101.3,123.9 82.2,124.4 82.1,125.0 102.4,125.0" stroke-width="2.35" stroke-opacity="1.00"/><polygon points="133.3,112.8 124.4,116.6 120.7,125.0 138.9,125.0 136.9,116.5" stroke-width="2.29" stroke-opacity="0.98"/><polygon points="144.3,120.5 136.9,116.5 138.9,125.0 146.4,125.0" stroke-width="2.34" stroke-opacity="1.00"/><polygon points="184.7,114.1 175.0,116.2 170.5,119.2 169.2,125.0 194.0,125.0 194.0,122.9" stroke-width="2.31" stroke-opacity="0.99"/><polygon points="21.6,124.2 20.3,125.0 22.4,125.0" stroke-width="2.35" stroke-opacity="1.00"/></g>
<rect width="191" height="122" fill="url(#bt)"/>
<rect width="191" height="5" fill="url(#sky)"/>
<rect y="4.5" width="191" height="7" fill="url(#hz)"/>
<path d="M120 17c25 1 48 4 71 8v10c-24-5-50-11-71-15z" fill="#1e3012" opacity="0.35"/>
<path d="M131 9C150 10 170 11.5 191 13V18.5C180 16 165 13.5 150 12C142 11.2 135 10.5 131 9z" fill="#b2c4ce"/>
<g fill="#d4c8a8">
<ellipse cx="43" cy="83" rx="4.4" ry="2.4" transform="rotate(-15 43 83)"/>
<ellipse cx="83" cy="75" rx="2.2" ry="3.6" transform="rotate(20 83 75)"/>
<ellipse cx="94" cy="70.5" rx="3.6" ry="2.2" />
<ellipse cx="94" cy="81.5" rx="2" ry="3.6" transform="rotate(15 94 81.5)"/>
<ellipse cx="81" cy="93.5" rx="1.9" ry="3.2" transform="rotate(-25 81 93.5)"/>
<ellipse cx="113" cy="71.5" rx="3.8" ry="2.4" transform="rotate(10 113 71.5)"/>
<ellipse cx="122" cy="69" rx="3.4" ry="2" transform="rotate(-20 122 69)"/>
<ellipse cx="107.5" cy="96" rx="3.8" ry="2.4" transform="rotate(-35 107.5 96)"/>
<ellipse cx="137.5" cy="77" rx="4" ry="2.2" transform="rotate(-15 137.5 77)"/>
<ellipse cx="143" cy="80.5" rx="2.7" ry="1.8" />
<ellipse cx="137.5" cy="88" rx="3.2" ry="1.9" />
<ellipse cx="87.5" cy="87" rx="2.8" ry="1.8" />
</g>
</svg></div>
<div class="a" style="left:0;top:424px;width:199px;height:26.5px;background:#d6d6d6"></div>
<div class="a" style="left:9.2px;top:431.5px;font-size:8.5px;line-height:13px;color:#1a1a1a">选择的距离：4324px</div>
<svg class="a" style="left:191.5px;top:442px" width="8" height="8"><path d="M7 0.5V7H0.5z" fill="#8a8a8a"/></svg>
</div>

<!-- CAPT logo -->
<svg class="a" style="left:4px;top:561px" width="30" height="27" viewBox="4 561 30 27">
<path d="M24.58 570.21A9.1 9.1 0 1 0 24.58 578.19" fill="none" stroke="#ee1c25" stroke-width="1.9"/>
<path d="M22.72 570.55A7.3 7.3 0 1 0 22.72 577.85" fill="none" stroke="#1a6fd0" stroke-width="1.4"/>
<path d="M21.09 570.79A5.8 5.8 0 1 0 21.09 577.61" fill="none" stroke="#f7e31a" stroke-width="1.6"/>
</svg>
<div class="a" style="left:11.2px;top:569px;font-size:9px;line-height:11px;font-weight:bold;color:#111;letter-spacing:0.5px">CAPT</div>
<div class="a" style="left:41.8px;top:569.3px;font-size:8.2px;line-height:12px;letter-spacing:0.38px;color:#1a1a1a">中国科学技术印刷所版权所有</div>

</body></html>
